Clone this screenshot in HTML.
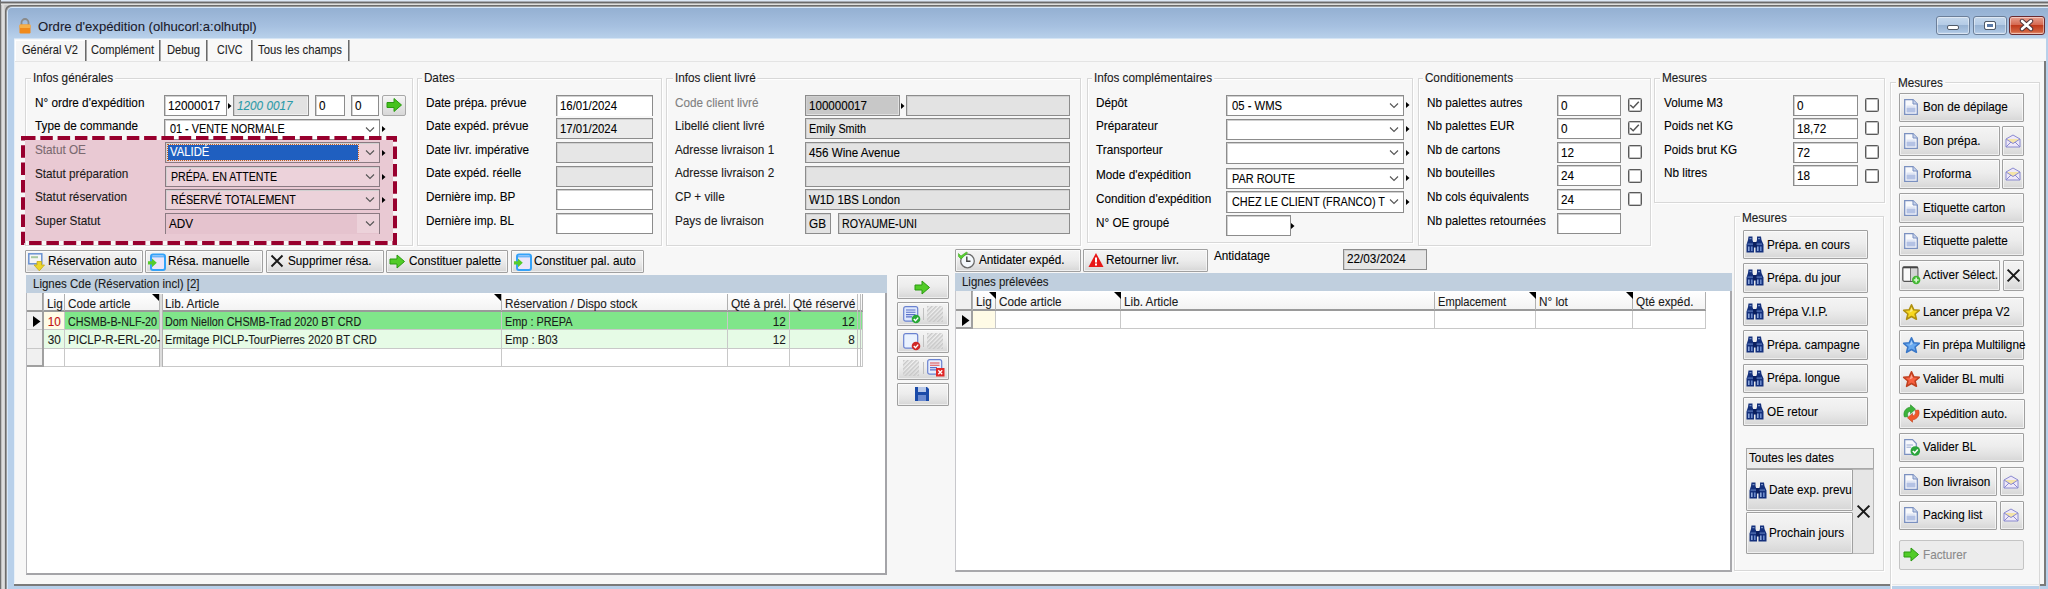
<!DOCTYPE html>
<html><head><meta charset="utf-8"><style>
html,body{margin:0;padding:0;width:2048px;height:589px;overflow:hidden;background:#f7f7f7}
body>div{position:absolute}
.t{position:absolute;white-space:nowrap;font-family:"Liberation Sans",sans-serif;-webkit-text-stroke:0.1px currentColor}
body{font-family:"Liberation Sans",sans-serif;font-size:12.4px}
</style></head><body>
<div style="left:0px;top:0px;width:2048px;height:589px;background:linear-gradient(90deg,#a8a8a8 1px,#d4d4d4 2px,#e4e4e4 3px,#c8c8c8 5px)"></div>
<div style="left:0px;top:0px;width:2048px;height:1px;background:#dce8f6"></div>
<div style="left:0px;top:1px;width:2048px;height:1px;background:#a8acb4"></div>
<div style="left:0px;top:2px;width:2048px;height:1px;background:#6a6a6a"></div>
<div style="left:0px;top:3px;width:2048px;height:1px;background:#b0b0b0"></div>
<div style="left:0px;top:4px;width:2048px;height:1px;background:#e0e0de"></div>
<div style="left:0px;top:0px;width:1px;height:589px;background:#707070"></div>
<div style="left:5px;top:5px;width:2043px;height:584px;background:#6c6c6c;border-top-left-radius:6px"></div>
<div style="left:6px;top:6px;width:2042px;height:583px;background:#9a9a9a;border-top-left-radius:6px"></div>
<div style="left:7px;top:7px;width:2041px;height:582px;background:#d6e8fb;border-top-left-radius:5px"></div>
<div style="left:8px;top:8px;width:2040px;height:581px;background:#b8d0ea;border-top-left-radius:4px"></div>
<div style="left:8px;top:8px;width:2040px;height:30px;background:linear-gradient(#94b0d2,#a6c0e0 60%,#b8d0ea);border-top-left-radius:4px"></div>
<svg style="position:absolute;left:18px;top:17px" width="14" height="17" viewBox="0 0 14 17"><path d="M3.5 8 V5.5 A3.5 3.5 0 0 1 10.5 5.5 V8" fill="none" stroke="#8a8a8a" stroke-width="1.8"/><rect x="1.5" y="7.5" width="11" height="9" rx="1.2" fill="#f08a1c"/><rect x="1.5" y="7.5" width="11" height="3.5" rx="1" fill="#f6b04a"/></svg>
<div class="t" style="left:38px;top:20.23px;font-size:13.2px;line-height:13.2px;color:#1a1a2a;transform:scaleX(0.9965);transform-origin:0 0;">Ordre d&#x27;expédition (olhucorl:a:olhutpl)</div>
<div style="left:1936px;top:16px;width:34px;height:19px;background:linear-gradient(#c6d8ec,#b4cbe6 45%,#98b3d3 50%,#a8c2e0 85%,#c3d6ee);border:1px solid #6c7f99;border-radius:3px;box-sizing:border-box;box-shadow:inset 0 0 0 1px rgba(255,255,255,.45)"></div>
<div style="left:1973px;top:16px;width:34px;height:19px;background:linear-gradient(#c6d8ec,#b4cbe6 45%,#98b3d3 50%,#a8c2e0 85%,#c3d6ee);border:1px solid #6c7f99;border-radius:3px;box-sizing:border-box;box-shadow:inset 0 0 0 1px rgba(255,255,255,.45)"></div>
<div style="left:2009px;top:16px;width:36px;height:19px;background:linear-gradient(#e8a090,#d56a52 45%,#c03a1c 50%,#d0603e 85%,#e89a80);border:1px solid #6a2a30;border-radius:3px;box-sizing:border-box;box-shadow:inset 0 0 0 1px rgba(255,255,255,.45)"></div>
<div style="left:1947px;top:25px;width:12px;height:5px;background:#fff;border:1px solid #505a68;border-radius:2px;box-sizing:border-box"></div>
<div style="left:1983.5px;top:20.5px;width:12px;height:9.5px;background:#5a7aa8;border:1px solid #505a68;box-shadow:inset 0 0 0 2px #fff;border-radius:2px;box-sizing:border-box"></div>
<svg style="position:absolute;left:2018px;top:18px" width="17" height="14" viewBox="0 0 17 14"><path d="M4 3 L13 11 M13 3 L4 11" stroke="#4a3038" stroke-width="4.4" stroke-linecap="round"/><path d="M4 3 L13 11 M13 3 L4 11" stroke="#fff" stroke-width="2.6" stroke-linecap="round"/></svg>
<div style="left:14px;top:38px;width:2032px;height:1px;background:#d4e4f4"></div>
<div style="left:14px;top:39px;width:2032px;height:547px;background:#f7f7f7"></div>
<div style="left:2044px;top:61px;width:2px;height:525px;background:#7a7a7a"></div>
<div style="left:14px;top:584px;width:1876px;height:2px;background:#7a7a7a"></div>
<div style="left:1890px;top:584px;width:150px;height:1px;background:#e8e8e8"></div>
<div style="left:2040px;top:584px;width:6px;height:2px;background:#7a7a7a"></div>
<div style="left:15px;top:61px;width:2029px;height:1px;background:#e4e4e4"></div>
<div style="left:14px;top:39px;width:1px;height:544px;background:#e8f0f8"></div>
<div style="left:15px;top:40px;width:335px;height:21px;background:#f8f8f8"></div>
<div style="left:15px;top:40px;width:71px;height:21px;background:#f6f6f6;border-top:1px solid #fff;border-left:1px solid #fff;box-sizing:border-box"></div>
<div style="left:85px;top:40px;width:1px;height:21px;background:#6a6a6a"></div>
<div style="left:86px;top:40px;width:1px;height:21px;background:#a8a8a8"></div>
<div style="left:159px;top:40px;width:1px;height:21px;background:#6a6a6a"></div>
<div style="left:160px;top:40px;width:1px;height:21px;background:#a8a8a8"></div>
<div style="left:206px;top:40px;width:1px;height:21px;background:#6a6a6a"></div>
<div style="left:207px;top:40px;width:1px;height:21px;background:#a8a8a8"></div>
<div style="left:251px;top:40px;width:1px;height:21px;background:#6a6a6a"></div>
<div style="left:252px;top:40px;width:1px;height:21px;background:#a8a8a8"></div>
<div style="left:348px;top:40px;width:1px;height:21px;background:#6a6a6a"></div>
<div style="left:349px;top:40px;width:1px;height:21px;background:#a8a8a8"></div>
<div class="t" style="left:22px;top:44.07px;font-size:12.2px;line-height:12.2px;color:#1e1e1e;transform:scaleX(0.9080);transform-origin:0 0;">Général V2</div>
<div class="t" style="left:91px;top:44.07px;font-size:12.2px;line-height:12.2px;color:#1e1e1e;transform:scaleX(0.9116);transform-origin:0 0;">Complément</div>
<div class="t" style="left:167px;top:44.07px;font-size:12.2px;line-height:12.2px;color:#1e1e1e;transform:scaleX(0.9187);transform-origin:0 0;">Debug</div>
<div class="t" style="left:216.5px;top:44.07px;font-size:12.2px;line-height:12.2px;color:#1e1e1e;transform:scaleX(0.8760);transform-origin:0 0;">CIVC</div>
<div class="t" style="left:258px;top:44.07px;font-size:12.2px;line-height:12.2px;color:#1e1e1e;transform:scaleX(0.9251);transform-origin:0 0;">Tous les champs</div>
<div style="left:25px;top:78px;width:388px;height:168px;border:1px solid #d8d8d8;box-shadow:inset 1px 1px 0 #fff, 1px 1px 0 #fff;box-sizing:border-box"></div>
<div class="t" style="left:31px;top:72.30px;font-size:12.4px;line-height:12.4px;color:#1a1a1a;transform:scaleX(0.9476);transform-origin:0 0;background:#f7f7f7;padding:0 2px">Infos générales</div>
<div style="left:417px;top:78px;width:245px;height:168px;border:1px solid #d8d8d8;box-shadow:inset 1px 1px 0 #fff, 1px 1px 0 #fff;box-sizing:border-box"></div>
<div class="t" style="left:422px;top:72.30px;font-size:12.4px;line-height:12.4px;color:#1a1a1a;transform:scaleX(0.9476);transform-origin:0 0;background:#f7f7f7;padding:0 2px">Dates</div>
<div style="left:666px;top:78px;width:415px;height:168px;border:1px solid #d8d8d8;box-shadow:inset 1px 1px 0 #fff, 1px 1px 0 #fff;box-sizing:border-box"></div>
<div class="t" style="left:673px;top:72.30px;font-size:12.4px;line-height:12.4px;color:#1a1a1a;transform:scaleX(0.9476);transform-origin:0 0;background:#f7f7f7;padding:0 2px">Infos client livré</div>
<div style="left:1087px;top:78px;width:326px;height:165px;border:1px solid #d8d8d8;box-shadow:inset 1px 1px 0 #fff, 1px 1px 0 #fff;box-sizing:border-box"></div>
<div class="t" style="left:1092px;top:72.30px;font-size:12.4px;line-height:12.4px;color:#1a1a1a;transform:scaleX(0.9476);transform-origin:0 0;background:#f7f7f7;padding:0 2px">Infos complémentaires</div>
<div style="left:1418px;top:78px;width:233px;height:168px;border:1px solid #d8d8d8;box-shadow:inset 1px 1px 0 #fff, 1px 1px 0 #fff;box-sizing:border-box"></div>
<div class="t" style="left:1423px;top:72.30px;font-size:12.4px;line-height:12.4px;color:#1a1a1a;transform:scaleX(0.9476);transform-origin:0 0;background:#f7f7f7;padding:0 2px">Conditionements</div>
<div style="left:1654px;top:78px;width:231px;height:125px;border:1px solid #d8d8d8;box-shadow:inset 1px 1px 0 #fff, 1px 1px 0 #fff;box-sizing:border-box"></div>
<div class="t" style="left:1660px;top:72.30px;font-size:12.4px;line-height:12.4px;color:#1a1a1a;transform:scaleX(0.9476);transform-origin:0 0;background:#f7f7f7;padding:0 2px">Mesures</div>
<div style="left:1734px;top:216px;width:150px;height:355px;border:1px solid #d8d8d8;box-shadow:inset 1px 1px 0 #fff, 1px 1px 0 #fff;box-sizing:border-box"></div>
<div class="t" style="left:1740px;top:211.90px;font-size:12.4px;line-height:12.4px;color:#1a1a1a;transform:scaleX(0.9476);transform-origin:0 0;background:#f7f7f7;padding:0 2px">Mesures</div>
<div style="left:1890px;top:82px;width:150px;height:510px;border-left:1px solid #d8d8d8;border-top:1px solid #d8d8d8;border-right:1px solid #d8d8d8;box-shadow:inset 1px 1px 0 #fff;box-sizing:border-box"></div>
<div class="t" style="left:1896px;top:76.50px;font-size:12.4px;line-height:12.4px;color:#1a1a1a;transform:scaleX(0.9476);transform-origin:0 0;background:#f7f7f7;padding:0 2px">Mesures</div>
<div class="t" style="left:35px;top:96.70px;font-size:12.4px;line-height:12.4px;color:#000;transform:scaleX(0.9476);transform-origin:0 0;">N° ordre d&#x27;expédition</div>
<div class="t" style="left:35px;top:120.20px;font-size:12.4px;line-height:12.4px;color:#000;transform:scaleX(0.9476);transform-origin:0 0;">Type de commande</div>
<div style="left:164px;top:95px;width:63px;height:21px;background:#fff;border:1px solid #8c8c8c;box-shadow:inset 1px 1px 0 #d0d0d0;box-sizing:border-box;"></div>
<div class="t" style="left:168px;top:99.90px;font-size:12.4px;line-height:12.4px;color:#000;transform:scaleX(0.9476);transform-origin:0 0;">12000017</div>
<svg style="position:absolute;left:228px;top:102.5px" width="4" height="6" viewBox="0 0 4 6"><path d="M0 0 L3.5 3 L0 6Z" fill="#000"/></svg>
<div style="left:233px;top:95px;width:76px;height:21px;background:#f0f0f0;border:1px solid #8c8c8c;box-shadow:inset 1px 1px 0 #d0d0d0;box-sizing:border-box;"></div>
<div style="left:235px;top:97px;width:72px;height:17px;background:#e2e2e2"></div>
<div class="t" style="left:237px;top:99.90px;font-size:12.4px;line-height:12.4px;color:#2a9aa8;transform:scaleX(0.9476);transform-origin:0 0;font-style:italic">1200 0017</div>
<div style="left:315px;top:95px;width:30px;height:21px;background:#fff;border:1px solid #8c8c8c;box-shadow:inset 1px 1px 0 #d0d0d0;box-sizing:border-box;"></div>
<div class="t" style="left:319px;top:99.90px;font-size:12.4px;line-height:12.4px;color:#000;transform:scaleX(0.9476);transform-origin:0 0;">0</div>
<div style="left:351px;top:95px;width:28px;height:21px;background:#fff;border:1px solid #8c8c8c;box-shadow:inset 1px 1px 0 #d0d0d0;box-sizing:border-box;"></div>
<div class="t" style="left:355px;top:99.90px;font-size:12.4px;line-height:12.4px;color:#000;transform:scaleX(0.9476);transform-origin:0 0;">0</div>
<div style="left:382px;top:95px;width:24px;height:21px;background:linear-gradient(#f6f6f6,#e6e6e6 50%,#d8d8d8);border:1px solid #a8a8a8;border-radius:2px;box-sizing:border-box"></div>
<svg style="position:absolute;left:386px;top:97px" width="17" height="16" viewBox="0 0 17 16"><path d="M1 5.5 H8 V1.5 L15.5 8 L8 14.5 V10.5 H1 Z" fill="#46c21e" stroke="#2a9a10" stroke-width="1"/></svg>
<div style="left:164px;top:118.5px;width:216px;height:21px;background:#fff;border:1px solid #8c8c8c;box-shadow:inset 1px 1px 0 #d0d0d0;box-sizing:border-box"></div>
<div class="t" style="left:170px;top:123.40px;font-size:12.4px;line-height:12.4px;color:#000;transform:scaleX(0.8767);transform-origin:0 0;">01 - VENTE NORMALE</div>
<svg style="position:absolute;left:365px;top:126.5px" width="10" height="6" viewBox="0 0 10 6"><path d="M1 0.5 L5 4.5 L9 0.5" fill="none" stroke="#555" stroke-width="1.1"/></svg>
<svg style="position:absolute;left:382px;top:126.0px" width="4" height="6" viewBox="0 0 4 6"><path d="M0 0 L3.5 3 L0 6Z" fill="#000"/></svg>
<div style="left:25px;top:140px;width:368px;height:101px;background:#e9c9d3"></div>
<svg style="position:absolute;left:21px;top:136px" width="376" height="109"><rect x="2" y="2" width="372" height="105" fill="none" stroke="#98002e" stroke-width="4" stroke-dasharray="12.5 4.8"/></svg>
<div class="t" style="left:35px;top:143.90px;font-size:12.4px;line-height:12.4px;color:#7a6a70;transform:scaleX(0.9476);transform-origin:0 0;">Statut OE</div>
<div class="t" style="left:35px;top:167.80px;font-size:12.4px;line-height:12.4px;color:#1a1a1a;transform:scaleX(0.9476);transform-origin:0 0;">Statut préparation</div>
<div class="t" style="left:35px;top:191.20px;font-size:12.4px;line-height:12.4px;color:#1a1a1a;transform:scaleX(0.9476);transform-origin:0 0;">Statut réservation</div>
<div class="t" style="left:35px;top:214.60px;font-size:12.4px;line-height:12.4px;color:#1a1a1a;transform:scaleX(0.9476);transform-origin:0 0;">Super Statut</div>
<div style="left:165px;top:142.2px;width:215px;height:20.5px;background:#ecd2da;border:1px solid #8a7a82;box-shadow:inset 1px 1px 0 #d0d0d0;box-sizing:border-box"></div>
<svg style="position:absolute;left:365px;top:150.2px" width="10" height="6" viewBox="0 0 10 6"><path d="M1 0.5 L5 4.5 L9 0.5" fill="none" stroke="#555" stroke-width="1.1"/></svg>
<svg style="position:absolute;left:382px;top:149.7px" width="4" height="6" viewBox="0 0 4 6"><path d="M0 0 L3.5 3 L0 6Z" fill="#000"/></svg>
<div style="left:165px;top:166px;width:215px;height:20.5px;background:#ecd2da;border:1px solid #8a7a82;box-shadow:inset 1px 1px 0 #d0d0d0;box-sizing:border-box"></div>
<div class="t" style="left:171px;top:170.90px;font-size:12.4px;line-height:12.4px;color:#000;transform:scaleX(0.8586);transform-origin:0 0;">PRÉPA. EN ATTENTE</div>
<svg style="position:absolute;left:365px;top:174px" width="10" height="6" viewBox="0 0 10 6"><path d="M1 0.5 L5 4.5 L9 0.5" fill="none" stroke="#555" stroke-width="1.1"/></svg>
<svg style="position:absolute;left:382px;top:173.5px" width="4" height="6" viewBox="0 0 4 6"><path d="M0 0 L3.5 3 L0 6Z" fill="#000"/></svg>
<div style="left:165px;top:189.4px;width:215px;height:20.5px;background:#ecd2da;border:1px solid #8a7a82;box-shadow:inset 1px 1px 0 #d0d0d0;box-sizing:border-box"></div>
<div class="t" style="left:171px;top:194.30px;font-size:12.4px;line-height:12.4px;color:#000;transform:scaleX(0.8643);transform-origin:0 0;">RÉSERVÉ TOTALEMENT</div>
<svg style="position:absolute;left:365px;top:197.4px" width="10" height="6" viewBox="0 0 10 6"><path d="M1 0.5 L5 4.5 L9 0.5" fill="none" stroke="#555" stroke-width="1.1"/></svg>
<svg style="position:absolute;left:382px;top:196.9px" width="4" height="6" viewBox="0 0 4 6"><path d="M0 0 L3.5 3 L0 6Z" fill="#000"/></svg>
<div style="left:168px;top:145px;width:190px;height:15px;background:#1f5fc0;outline:1px dotted #c06020"></div>
<div class="t" style="left:170px;top:146.20px;font-size:12.4px;line-height:12.4px;color:#fff;transform:scaleX(0.9130);transform-origin:0 0;">VALIDÉ</div>
<div style="left:165px;top:213px;width:215px;height:21px;background:#e5c3ce;border-left:1px solid #8a7a82;border-top:1px solid #8a7a82;border-right:1px solid #8a7a82;box-sizing:border-box"></div>
<div style="left:357px;top:214px;width:22px;height:19px;background:#ecd2da"></div>
<div class="t" style="left:169px;top:217.90px;font-size:12.4px;line-height:12.4px;color:#000;transform:scaleX(0.9476);transform-origin:0 0;">ADV</div>
<svg style="position:absolute;left:365px;top:221px" width="10" height="6" viewBox="0 0 10 6"><path d="M1 0.5 L5 4.5 L9 0.5" fill="none" stroke="#555" stroke-width="1.1"/></svg>
<div class="t" style="left:426px;top:96.70px;font-size:12.4px;line-height:12.4px;color:#000;transform:scaleX(0.9476);transform-origin:0 0;">Date prépa. prévue</div>
<div class="t" style="left:426px;top:120.20px;font-size:12.4px;line-height:12.4px;color:#000;transform:scaleX(0.9476);transform-origin:0 0;">Date expéd. prévue</div>
<div class="t" style="left:426px;top:143.70px;font-size:12.4px;line-height:12.4px;color:#000;transform:scaleX(0.9476);transform-origin:0 0;">Date livr. impérative</div>
<div class="t" style="left:426px;top:167.40px;font-size:12.4px;line-height:12.4px;color:#000;transform:scaleX(0.9476);transform-origin:0 0;">Date expéd. réelle</div>
<div class="t" style="left:426px;top:191.10px;font-size:12.4px;line-height:12.4px;color:#000;transform:scaleX(0.9476);transform-origin:0 0;">Dernière imp. BP</div>
<div class="t" style="left:426px;top:214.60px;font-size:12.4px;line-height:12.4px;color:#000;transform:scaleX(0.9476);transform-origin:0 0;">Dernière imp. BL</div>
<div style="left:556px;top:94.6px;width:97px;height:21px;background:#fff;border:1px solid #8c8c8c;box-shadow:inset 1px 1px 0 #d0d0d0;box-sizing:border-box;border-bottom:none"></div>
<div class="t" style="left:560px;top:99.50px;font-size:12.4px;line-height:12.4px;color:#000;transform:scaleX(0.9194);transform-origin:0 0;">16/01/2024</div>
<div style="left:556px;top:118.3px;width:97px;height:21px;background:#ebebeb;border:1px solid #8c8c8c;box-shadow:inset 1px 1px 0 #d0d0d0;box-sizing:border-box;"></div>
<div class="t" style="left:560px;top:123.20px;font-size:12.4px;line-height:12.4px;color:#000;transform:scaleX(0.9194);transform-origin:0 0;">17/01/2024</div>
<div style="left:556px;top:142px;width:97px;height:21px;background:#e6e6e6;border:1px solid #8c8c8c;box-shadow:inset 1px 1px 0 #d0d0d0;box-sizing:border-box;"></div>
<div style="left:556px;top:165.7px;width:97px;height:21px;background:#e6e6e6;border:1px solid #8c8c8c;box-shadow:inset 1px 1px 0 #d0d0d0;box-sizing:border-box;"></div>
<div style="left:556px;top:189.4px;width:97px;height:21px;background:#fff;border:1px solid #8c8c8c;box-shadow:inset 1px 1px 0 #d0d0d0;box-sizing:border-box;"></div>
<div style="left:556px;top:213px;width:97px;height:21px;background:#fff;border:1px solid #8c8c8c;box-shadow:inset 1px 1px 0 #d0d0d0;box-sizing:border-box;"></div>
<div class="t" style="left:675px;top:96.70px;font-size:12.4px;line-height:12.4px;color:#808080;transform:scaleX(0.9476);transform-origin:0 0;">Code client livré</div>
<div class="t" style="left:675px;top:120.20px;font-size:12.4px;line-height:12.4px;color:#1a1a1a;transform:scaleX(0.9476);transform-origin:0 0;">Libellé client livré</div>
<div class="t" style="left:675px;top:143.70px;font-size:12.4px;line-height:12.4px;color:#1a1a1a;transform:scaleX(0.9476);transform-origin:0 0;">Adresse livraison 1</div>
<div class="t" style="left:675px;top:167.40px;font-size:12.4px;line-height:12.4px;color:#1a1a1a;transform:scaleX(0.9476);transform-origin:0 0;">Adresse livraison 2</div>
<div class="t" style="left:675px;top:191.10px;font-size:12.4px;line-height:12.4px;color:#1a1a1a;transform:scaleX(0.9476);transform-origin:0 0;">CP + ville</div>
<div class="t" style="left:675px;top:214.60px;font-size:12.4px;line-height:12.4px;color:#1a1a1a;transform:scaleX(0.9476);transform-origin:0 0;">Pays de livraison</div>
<div style="left:805px;top:94.6px;width:95px;height:21px;background:#e0e0e0;border:1px solid #8c8c8c;box-shadow:inset 1px 1px 0 #d0d0d0;box-sizing:border-box;"></div>
<div style="left:807px;top:96.6px;width:91px;height:17px;background:#c8c8c8"></div>
<div class="t" style="left:809px;top:99.50px;font-size:12.4px;line-height:12.4px;color:#000;transform:scaleX(0.9352);transform-origin:0 0;">100000017</div>
<svg style="position:absolute;left:901px;top:102.5px" width="4" height="6" viewBox="0 0 4 6"><path d="M0 0 L3.5 3 L0 6Z" fill="#000"/></svg>
<div style="left:906px;top:94.6px;width:164px;height:21px;background:#e3e3e3;border:1px solid #8c8c8c;box-shadow:inset 1px 1px 0 #d0d0d0;box-sizing:border-box;"></div>
<div style="left:805px;top:118.3px;width:265px;height:21px;background:#e3e3e3;border:1px solid #8c8c8c;box-shadow:inset 1px 1px 0 #d0d0d0;box-sizing:border-box;"></div>
<div class="t" style="left:809px;top:123.20px;font-size:12.4px;line-height:12.4px;color:#000;transform:scaleX(0.8715);transform-origin:0 0;">Emily Smith</div>
<div style="left:805px;top:142px;width:265px;height:21px;background:#e3e3e3;border:1px solid #8c8c8c;box-shadow:inset 1px 1px 0 #d0d0d0;box-sizing:border-box;"></div>
<div class="t" style="left:809px;top:146.90px;font-size:12.4px;line-height:12.4px;color:#000;transform:scaleX(0.9392);transform-origin:0 0;">456 Wine Avenue</div>
<div style="left:805px;top:165.7px;width:265px;height:21px;background:#e3e3e3;border:1px solid #8c8c8c;box-shadow:inset 1px 1px 0 #d0d0d0;box-sizing:border-box;"></div>
<div style="left:805px;top:189.4px;width:265px;height:21px;background:#e3e3e3;border:1px solid #8c8c8c;box-shadow:inset 1px 1px 0 #d0d0d0;box-sizing:border-box;"></div>
<div class="t" style="left:809px;top:194.30px;font-size:12.4px;line-height:12.4px;color:#000;transform:scaleX(0.9176);transform-origin:0 0;">W1D 1BS London</div>
<div style="left:805px;top:213px;width:26px;height:21px;background:#e3e3e3;border:1px solid #8c8c8c;box-shadow:inset 1px 1px 0 #d0d0d0;box-sizing:border-box;"></div>
<div class="t" style="left:809px;top:217.90px;font-size:12.4px;line-height:12.4px;color:#000;transform:scaleX(0.9476);transform-origin:0 0;">GB</div>
<div style="left:838px;top:213px;width:232px;height:21px;background:#e3e3e3;border:1px solid #8c8c8c;box-shadow:inset 1px 1px 0 #d0d0d0;box-sizing:border-box;"></div>
<div class="t" style="left:842px;top:217.90px;font-size:12.4px;line-height:12.4px;color:#000;transform:scaleX(0.8599);transform-origin:0 0;">ROYAUME-UNI</div>
<div class="t" style="left:1096px;top:96.70px;font-size:12.4px;line-height:12.4px;color:#000;transform:scaleX(0.9476);transform-origin:0 0;">Dépôt</div>
<div class="t" style="left:1096px;top:120.20px;font-size:12.4px;line-height:12.4px;color:#000;transform:scaleX(0.9476);transform-origin:0 0;">Préparateur</div>
<div class="t" style="left:1096px;top:143.90px;font-size:12.4px;line-height:12.4px;color:#000;transform:scaleX(0.9476);transform-origin:0 0;">Transporteur</div>
<div class="t" style="left:1096px;top:169.40px;font-size:12.4px;line-height:12.4px;color:#000;transform:scaleX(0.9476);transform-origin:0 0;">Mode d&#x27;expédition</div>
<div class="t" style="left:1096px;top:192.80px;font-size:12.4px;line-height:12.4px;color:#000;transform:scaleX(0.9476);transform-origin:0 0;">Condition d&#x27;expédition</div>
<div class="t" style="left:1096px;top:216.60px;font-size:12.4px;line-height:12.4px;color:#000;transform:scaleX(0.9476);transform-origin:0 0;">N° OE groupé</div>
<div style="left:1226px;top:94.8px;width:178px;height:21px;background:#fff;border:1px solid #8c8c8c;box-shadow:inset 1px 1px 0 #d0d0d0;box-sizing:border-box"></div>
<div class="t" style="left:1232px;top:99.70px;font-size:12.4px;line-height:12.4px;color:#000;transform:scaleX(0.9081);transform-origin:0 0;">05 - WMS</div>
<svg style="position:absolute;left:1389px;top:102.8px" width="10" height="6" viewBox="0 0 10 6"><path d="M1 0.5 L5 4.5 L9 0.5" fill="none" stroke="#555" stroke-width="1.1"/></svg>
<svg style="position:absolute;left:1406px;top:102.3px" width="4" height="6" viewBox="0 0 4 6"><path d="M0 0 L3.5 3 L0 6Z" fill="#000"/></svg>
<div style="left:1226px;top:118.6px;width:178px;height:21px;background:#fff;border:1px solid #8c8c8c;box-shadow:inset 1px 1px 0 #d0d0d0;box-sizing:border-box"></div>
<svg style="position:absolute;left:1389px;top:126.6px" width="10" height="6" viewBox="0 0 10 6"><path d="M1 0.5 L5 4.5 L9 0.5" fill="none" stroke="#555" stroke-width="1.1"/></svg>
<svg style="position:absolute;left:1406px;top:126.1px" width="4" height="6" viewBox="0 0 4 6"><path d="M0 0 L3.5 3 L0 6Z" fill="#000"/></svg>
<div style="left:1226px;top:142.4px;width:178px;height:22px;background:#fff;border:1px solid #8c8c8c;box-shadow:inset 1px 1px 0 #d0d0d0;box-sizing:border-box"></div>
<svg style="position:absolute;left:1389px;top:150.4px" width="10" height="6" viewBox="0 0 10 6"><path d="M1 0.5 L5 4.5 L9 0.5" fill="none" stroke="#555" stroke-width="1.1"/></svg>
<svg style="position:absolute;left:1406px;top:149.9px" width="4" height="6" viewBox="0 0 4 6"><path d="M0 0 L3.5 3 L0 6Z" fill="#000"/></svg>
<div style="left:1226px;top:167.7px;width:178px;height:21.5px;background:#fff;border:1px solid #8c8c8c;box-shadow:inset 1px 1px 0 #d0d0d0;box-sizing:border-box"></div>
<div class="t" style="left:1232px;top:172.60px;font-size:12.4px;line-height:12.4px;color:#000;transform:scaleX(0.8827);transform-origin:0 0;">PAR ROUTE</div>
<svg style="position:absolute;left:1389px;top:175.7px" width="10" height="6" viewBox="0 0 10 6"><path d="M1 0.5 L5 4.5 L9 0.5" fill="none" stroke="#555" stroke-width="1.1"/></svg>
<svg style="position:absolute;left:1406px;top:175.2px" width="4" height="6" viewBox="0 0 4 6"><path d="M0 0 L3.5 3 L0 6Z" fill="#000"/></svg>
<div style="left:1226px;top:191px;width:178px;height:21.5px;background:#fff;border:1px solid #8c8c8c;box-shadow:inset 1px 1px 0 #d0d0d0;box-sizing:border-box"></div>
<div class="t" style="left:1232px;top:195.90px;font-size:12.4px;line-height:12.4px;color:#000;transform:scaleX(0.8773);transform-origin:0 0;">CHEZ LE CLIENT (FRANCO) T</div>
<svg style="position:absolute;left:1389px;top:199px" width="10" height="6" viewBox="0 0 10 6"><path d="M1 0.5 L5 4.5 L9 0.5" fill="none" stroke="#555" stroke-width="1.1"/></svg>
<svg style="position:absolute;left:1406px;top:198.5px" width="4" height="6" viewBox="0 0 4 6"><path d="M0 0 L3.5 3 L0 6Z" fill="#000"/></svg>
<div style="left:1226px;top:215px;width:65px;height:21px;background:#fff;border:1px solid #8c8c8c;box-shadow:inset 1px 1px 0 #d0d0d0;box-sizing:border-box;"></div>
<svg style="position:absolute;left:1291px;top:222.5px" width="4" height="6" viewBox="0 0 4 6"><path d="M0 0 L3.5 3 L0 6Z" fill="#000"/></svg>
<div class="t" style="left:1427px;top:96.70px;font-size:12.4px;line-height:12.4px;color:#000;transform:scaleX(0.9476);transform-origin:0 0;">Nb palettes autres</div>
<div style="left:1557px;top:94.6px;width:64px;height:21px;background:#fff;border:1px solid #8c8c8c;box-shadow:inset 1px 1px 0 #d0d0d0;box-sizing:border-box;"></div>
<div class="t" style="left:1561px;top:99.50px;font-size:12.4px;line-height:12.4px;color:#000;transform:scaleX(0.9476);transform-origin:0 0;">0</div>
<div class="t" style="left:1427px;top:120.20px;font-size:12.4px;line-height:12.4px;color:#000;transform:scaleX(0.9476);transform-origin:0 0;">Nb palettes EUR</div>
<div style="left:1557px;top:118.19999999999999px;width:64px;height:21px;background:#fff;border:1px solid #8c8c8c;box-shadow:inset 1px 1px 0 #d0d0d0;box-sizing:border-box;"></div>
<div class="t" style="left:1561px;top:123.10px;font-size:12.4px;line-height:12.4px;color:#000;transform:scaleX(0.9476);transform-origin:0 0;">0</div>
<div class="t" style="left:1427px;top:143.70px;font-size:12.4px;line-height:12.4px;color:#000;transform:scaleX(0.9476);transform-origin:0 0;">Nb de cartons</div>
<div style="left:1557px;top:141.8px;width:64px;height:21px;background:#fff;border:1px solid #8c8c8c;box-shadow:inset 1px 1px 0 #d0d0d0;box-sizing:border-box;"></div>
<div class="t" style="left:1561px;top:146.70px;font-size:12.4px;line-height:12.4px;color:#000;transform:scaleX(0.9476);transform-origin:0 0;">12</div>
<div class="t" style="left:1427px;top:167.40px;font-size:12.4px;line-height:12.4px;color:#000;transform:scaleX(0.9476);transform-origin:0 0;">Nb bouteilles</div>
<div style="left:1557px;top:165.4px;width:64px;height:21px;background:#fff;border:1px solid #8c8c8c;box-shadow:inset 1px 1px 0 #d0d0d0;box-sizing:border-box;"></div>
<div class="t" style="left:1561px;top:170.30px;font-size:12.4px;line-height:12.4px;color:#000;transform:scaleX(0.9476);transform-origin:0 0;">24</div>
<div class="t" style="left:1427px;top:191.10px;font-size:12.4px;line-height:12.4px;color:#000;transform:scaleX(0.9476);transform-origin:0 0;">Nb cols équivalents</div>
<div style="left:1557px;top:189.0px;width:64px;height:21px;background:#fff;border:1px solid #8c8c8c;box-shadow:inset 1px 1px 0 #d0d0d0;box-sizing:border-box;"></div>
<div class="t" style="left:1561px;top:193.90px;font-size:12.4px;line-height:12.4px;color:#000;transform:scaleX(0.9476);transform-origin:0 0;">24</div>
<div class="t" style="left:1427px;top:214.60px;font-size:12.4px;line-height:12.4px;color:#000;transform:scaleX(0.9476);transform-origin:0 0;">Nb palettes retournées</div>
<div style="left:1557px;top:212.6px;width:64px;height:21px;background:#fff;border:1px solid #8c8c8c;box-shadow:inset 1px 1px 0 #d0d0d0;box-sizing:border-box;"></div>
<div style="left:1627.5px;top:97.7px;width:14px;height:14px;background:#fff;border:1px solid #5a5a5a;border-radius:1.5px;box-shadow:inset 0 0 0 0.6px #8a8a8a;box-sizing:border-box"></div>
<svg style="position:absolute;left:1627px;top:97.7px" width="14" height="14" viewBox="0 0 14 14"><path d="M3.2 7 L6.2 9.8 L11.8 3.8" fill="none" stroke="#555" stroke-width="1.5"/></svg>
<div style="left:1627.5px;top:121.30000000000001px;width:14px;height:14px;background:#fff;border:1px solid #5a5a5a;border-radius:1.5px;box-shadow:inset 0 0 0 0.6px #8a8a8a;box-sizing:border-box"></div>
<svg style="position:absolute;left:1627px;top:121.30000000000001px" width="14" height="14" viewBox="0 0 14 14"><path d="M3.2 7 L6.2 9.8 L11.8 3.8" fill="none" stroke="#555" stroke-width="1.5"/></svg>
<div style="left:1627.5px;top:144.9px;width:14px;height:14px;background:#fff;border:1px solid #5a5a5a;border-radius:1.5px;box-shadow:inset 0 0 0 0.6px #8a8a8a;box-sizing:border-box"></div>
<div style="left:1627.5px;top:168.5px;width:14px;height:14px;background:#fff;border:1px solid #5a5a5a;border-radius:1.5px;box-shadow:inset 0 0 0 0.6px #8a8a8a;box-sizing:border-box"></div>
<div style="left:1627.5px;top:192.10000000000002px;width:14px;height:14px;background:#fff;border:1px solid #5a5a5a;border-radius:1.5px;box-shadow:inset 0 0 0 0.6px #8a8a8a;box-sizing:border-box"></div>
<div class="t" style="left:1664px;top:96.70px;font-size:12.4px;line-height:12.4px;color:#000;transform:scaleX(0.9476);transform-origin:0 0;">Volume M3</div>
<div style="left:1793px;top:94.6px;width:65px;height:21px;background:#fff;border:1px solid #8c8c8c;box-shadow:inset 1px 1px 0 #d0d0d0;box-sizing:border-box;"></div>
<div class="t" style="left:1797px;top:99.50px;font-size:12.4px;line-height:12.4px;color:#000;transform:scaleX(0.9476);transform-origin:0 0;">0</div>
<div style="left:1864.5px;top:97.7px;width:14px;height:14px;background:#fff;border:1px solid #5a5a5a;border-radius:1.5px;box-shadow:inset 0 0 0 0.6px #8a8a8a;box-sizing:border-box"></div>
<div class="t" style="left:1664px;top:120.20px;font-size:12.4px;line-height:12.4px;color:#000;transform:scaleX(0.9476);transform-origin:0 0;">Poids net KG</div>
<div style="left:1793px;top:118.19999999999999px;width:65px;height:21px;background:#fff;border:1px solid #8c8c8c;box-shadow:inset 1px 1px 0 #d0d0d0;box-sizing:border-box;"></div>
<div class="t" style="left:1797px;top:123.10px;font-size:12.4px;line-height:12.4px;color:#000;transform:scaleX(0.9476);transform-origin:0 0;">18,72</div>
<div style="left:1864.5px;top:121.30000000000001px;width:14px;height:14px;background:#fff;border:1px solid #5a5a5a;border-radius:1.5px;box-shadow:inset 0 0 0 0.6px #8a8a8a;box-sizing:border-box"></div>
<div class="t" style="left:1664px;top:143.70px;font-size:12.4px;line-height:12.4px;color:#000;transform:scaleX(0.9476);transform-origin:0 0;">Poids brut KG</div>
<div style="left:1793px;top:141.8px;width:65px;height:21px;background:#fff;border:1px solid #8c8c8c;box-shadow:inset 1px 1px 0 #d0d0d0;box-sizing:border-box;"></div>
<div class="t" style="left:1797px;top:146.70px;font-size:12.4px;line-height:12.4px;color:#000;transform:scaleX(0.9476);transform-origin:0 0;">72</div>
<div style="left:1864.5px;top:144.9px;width:14px;height:14px;background:#fff;border:1px solid #5a5a5a;border-radius:1.5px;box-shadow:inset 0 0 0 0.6px #8a8a8a;box-sizing:border-box"></div>
<div class="t" style="left:1664px;top:167.40px;font-size:12.4px;line-height:12.4px;color:#000;transform:scaleX(0.9476);transform-origin:0 0;">Nb litres</div>
<div style="left:1793px;top:165.4px;width:65px;height:21px;background:#fff;border:1px solid #8c8c8c;box-shadow:inset 1px 1px 0 #d0d0d0;box-sizing:border-box;"></div>
<div class="t" style="left:1797px;top:170.30px;font-size:12.4px;line-height:12.4px;color:#000;transform:scaleX(0.9476);transform-origin:0 0;">18</div>
<div style="left:1864.5px;top:168.5px;width:14px;height:14px;background:#fff;border:1px solid #5a5a5a;border-radius:1.5px;box-shadow:inset 0 0 0 0.6px #8a8a8a;box-sizing:border-box"></div>
<div style="left:25px;top:249.5px;width:118px;height:23px;background:linear-gradient(#f4f4f4,#ededed 45%,#e2e2e2 75%,#d6d6d6);border:1px solid #a0a0a0;border-radius:1px;box-sizing:border-box;box-shadow:inset 0 0 0 1px rgba(255,255,255,.6)"></div>
<svg style="position:absolute;left:27px;top:251.5px" width="20" height="20" viewBox="0 0 20 20"><rect x="1.8" y="1.8" width="13" height="10" fill="#f6f6f6" stroke="#6a92d2" stroke-width="1.5"/><rect x="4" y="4.2" width="7" height="2" fill="#a8c8a0"/><path d="M10 9.5 H14.5 V13 H17.5 L12.3 18.8 L7 13 H10Z" fill="#ecd62a" stroke="#c4a818" stroke-width=".8"/></svg>
<div class="t" style="left:48px;top:255.20px;font-size:12.4px;line-height:12.4px;color:#000;transform:scaleX(0.9476);transform-origin:0 0;">Réservation auto</div>
<div style="left:145px;top:249.5px;width:118px;height:23px;background:linear-gradient(#f4f4f4,#ededed 45%,#e2e2e2 75%,#d6d6d6);border:1px solid #a0a0a0;border-radius:1px;box-sizing:border-box;box-shadow:inset 0 0 0 1px rgba(255,255,255,.6)"></div>
<svg style="position:absolute;left:147px;top:252.5px" width="20" height="19" viewBox="0 0 20 19"><rect x="4" y="1.5" width="14" height="15.5" rx="2" fill="#ece6fa" stroke="#34a2f8" stroke-width="2"/><path d="M4.5 3.8 H17.5" stroke="#34a2f8" stroke-width="1"/><path d="M1 8.2 H5 V5.5 L9.8 9.8 L5 14.2 V11.5 H1Z" fill="#56cc2c"/></svg>
<div class="t" style="left:168px;top:255.20px;font-size:12.4px;line-height:12.4px;color:#000;transform:scaleX(0.9476);transform-origin:0 0;">Résa. manuelle</div>
<div style="left:265.5px;top:249.5px;width:118px;height:23px;background:linear-gradient(#f4f4f4,#ededed 45%,#e2e2e2 75%,#d6d6d6);border:1px solid #a0a0a0;border-radius:1px;box-sizing:border-box;box-shadow:inset 0 0 0 1px rgba(255,255,255,.6)"></div>
<svg style="position:absolute;left:269.5px;top:254.0px" width="14" height="14" viewBox="0 0 14 14"><path d="M1.5 1.5 L12.5 12.5 M12.5 1.5 L1.5 12.5" stroke="#1a1a1a" stroke-width="1.9"/></svg>
<div class="t" style="left:288px;top:255.20px;font-size:12.4px;line-height:12.4px;color:#000;transform:scaleX(0.9476);transform-origin:0 0;">Supprimer résa.</div>
<div style="left:386px;top:249.5px;width:122px;height:23px;background:linear-gradient(#f4f4f4,#ededed 45%,#e2e2e2 75%,#d6d6d6);border:1px solid #a0a0a0;border-radius:1px;box-sizing:border-box;box-shadow:inset 0 0 0 1px rgba(255,255,255,.6)"></div>
<svg style="position:absolute;left:389px;top:253.5px" width="17" height="15" viewBox="0 0 17 15"><path d="M1 5 H8 V1 L15.5 7.5 L8 14 V10 H1 Z" fill="#52cc28" stroke="#2a9a10" stroke-width="1"/></svg>
<div class="t" style="left:409px;top:255.20px;font-size:12.4px;line-height:12.4px;color:#000;transform:scaleX(0.9476);transform-origin:0 0;">Constituer palette</div>
<div style="left:510.5px;top:249.5px;width:133px;height:23px;background:linear-gradient(#f4f4f4,#ededed 45%,#e2e2e2 75%,#d6d6d6);border:1px solid #a0a0a0;border-radius:1px;box-sizing:border-box;box-shadow:inset 0 0 0 1px rgba(255,255,255,.6)"></div>
<svg style="position:absolute;left:512.5px;top:252.5px" width="20" height="19" viewBox="0 0 20 19"><rect x="4" y="1.5" width="14" height="15.5" rx="2" fill="#ece6fa" stroke="#34a2f8" stroke-width="2"/><path d="M4.5 3.8 H17.5" stroke="#34a2f8" stroke-width="1"/><path d="M1 8.2 H5 V5.5 L9.8 9.8 L5 14.2 V11.5 H1Z" fill="#56cc2c"/></svg>
<div class="t" style="left:534px;top:255.20px;font-size:12.4px;line-height:12.4px;color:#000;transform:scaleX(0.9476);transform-origin:0 0;">Constituer pal. auto</div>
<div style="left:954.5px;top:248.5px;width:126px;height:23px;background:linear-gradient(#f4f4f4,#ededed 45%,#e2e2e2 75%,#d6d6d6);border:1px solid #a0a0a0;border-radius:1px;box-sizing:border-box;box-shadow:inset 0 0 0 1px rgba(255,255,255,.6)"></div>
<svg style="position:absolute;left:957.5px;top:251.0px" width="18" height="18" viewBox="0 0 18 18"><circle cx="9.5" cy="10" r="6.8" fill="#f4f8fc" stroke="#6a6a6a" stroke-width="1.3"/><path d="M8.8 5.5 V10.2 H12.5" fill="none" stroke="#404040" stroke-width="1.4"/><path d="M0.5 2.5 L3 5 L8.5 1 L9.5 2 L3 8 L0.5 5.5Z" fill="#58d030" stroke="#40a820" stroke-width=".6"/></svg>
<div class="t" style="left:979.4px;top:254.20px;font-size:12.4px;line-height:12.4px;color:#000;transform:scaleX(0.9476);transform-origin:0 0;">Antidater expéd.</div>
<div style="left:1083px;top:248.5px;width:125px;height:23px;background:linear-gradient(#f4f4f4,#ededed 45%,#e2e2e2 75%,#d6d6d6);border:1px solid #a0a0a0;border-radius:1px;box-sizing:border-box;box-shadow:inset 0 0 0 1px rgba(255,255,255,.6)"></div>
<svg style="position:absolute;left:1088px;top:252.0px" width="16" height="16" viewBox="0 0 16 16"><path d="M8 1 L15.5 15 H0.5Z" fill="#e81818"/><rect x="7" y="5.5" width="2" height="5" fill="#fff"/><rect x="7" y="11.5" width="2" height="2" fill="#fff"/></svg>
<div class="t" style="left:1106px;top:254.20px;font-size:12.4px;line-height:12.4px;color:#000;transform:scaleX(0.9476);transform-origin:0 0;">Retourner livr.</div>
<div class="t" style="left:1213.5px;top:249.80px;font-size:12.4px;line-height:12.4px;color:#000;transform:scaleX(0.9476);transform-origin:0 0;">Antidatage</div>
<div style="left:1342.5px;top:248.5px;width:84px;height:21px;background:#e6e6e6;border:1px solid #8c8c8c;box-shadow:inset 1px 1px 0 #d0d0d0;box-sizing:border-box;"></div>
<div class="t" style="left:1346.5px;top:253.40px;font-size:12.4px;line-height:12.4px;color:#000;transform:scaleX(0.9476);transform-origin:0 0;">22/03/2024</div>
<div style="left:1898.5px;top:92.5px;width:125.5px;height:29.5px;background:linear-gradient(#f4f4f4,#ededed 45%,#e2e2e2 75%,#d6d6d6);border:1px solid #a0a0a0;border-radius:1px;box-sizing:border-box;box-shadow:inset 0 0 0 1px rgba(255,255,255,.6)"></div>
<svg style="position:absolute;left:1903.5px;top:99.25px" width="14" height="16" viewBox="0 0 14 16"><path d="M0.7 0.7 H9 L13.3 5 V15.3 H0.7Z" fill="#f8f9fc" stroke="#7a90c0" stroke-width="1.3"/><path d="M9 0.7 V5 H13.3" fill="#c8d4ec" stroke="#7a90c0" stroke-width="1"/><rect x="2.5" y="8.5" width="9" height="5" fill="#b4c2e4"/><rect x="2.5" y="6.5" width="9" height="1.5" fill="#dfe6f4"/></svg>
<div class="t" style="left:1922.5px;top:101.45px;font-size:12.4px;line-height:12.4px;color:#000;transform:scaleX(0.9476);transform-origin:0 0;">Bon de dépilage</div>
<div style="left:1898.5px;top:126px;width:101px;height:29.5px;background:linear-gradient(#f4f4f4,#ededed 45%,#e2e2e2 75%,#d6d6d6);border:1px solid #a0a0a0;border-radius:1px;box-sizing:border-box;box-shadow:inset 0 0 0 1px rgba(255,255,255,.6)"></div>
<svg style="position:absolute;left:1903.5px;top:132.75px" width="14" height="16" viewBox="0 0 14 16"><path d="M0.7 0.7 H9 L13.3 5 V15.3 H0.7Z" fill="#f8f9fc" stroke="#7a90c0" stroke-width="1.3"/><path d="M9 0.7 V5 H13.3" fill="#c8d4ec" stroke="#7a90c0" stroke-width="1"/><rect x="2.5" y="8.5" width="9" height="5" fill="#b4c2e4"/><rect x="2.5" y="6.5" width="9" height="1.5" fill="#dfe6f4"/></svg>
<div class="t" style="left:1922.5px;top:134.95px;font-size:12.4px;line-height:12.4px;color:#000;transform:scaleX(0.9476);transform-origin:0 0;">Bon prépa.</div>
<div style="left:2002px;top:126px;width:22px;height:29.5px;background:linear-gradient(#f4f4f4,#ededed 45%,#e2e2e2 75%,#d6d6d6);border:1px solid #a0a0a0;border-radius:1px;box-sizing:border-box;box-shadow:inset 0 0 0 1px rgba(255,255,255,.6)"></div>
<svg style="position:absolute;left:2005px;top:133.75px" width="16" height="14" viewBox="0 0 16 14"><path d="M1 5 L8 1 L15 5 V13 H1Z" fill="#eee8f8" stroke="#8a8ad0"/><path d="M1 5 L8 9.5 L15 5" fill="#f4e4a8" stroke="#8a8ad0"/><path d="M1 13 L6 8 M15 13 L10 8" stroke="#8a8ad0"/></svg>
<div style="left:1898.5px;top:159px;width:101px;height:29.5px;background:linear-gradient(#f4f4f4,#ededed 45%,#e2e2e2 75%,#d6d6d6);border:1px solid #a0a0a0;border-radius:1px;box-sizing:border-box;box-shadow:inset 0 0 0 1px rgba(255,255,255,.6)"></div>
<svg style="position:absolute;left:1903.5px;top:165.75px" width="14" height="16" viewBox="0 0 14 16"><path d="M0.7 0.7 H9 L13.3 5 V15.3 H0.7Z" fill="#f8f9fc" stroke="#7a90c0" stroke-width="1.3"/><path d="M9 0.7 V5 H13.3" fill="#c8d4ec" stroke="#7a90c0" stroke-width="1"/><rect x="2.5" y="8.5" width="9" height="5" fill="#b4c2e4"/><rect x="2.5" y="6.5" width="9" height="1.5" fill="#dfe6f4"/></svg>
<div class="t" style="left:1922.5px;top:167.95px;font-size:12.4px;line-height:12.4px;color:#000;transform:scaleX(0.9476);transform-origin:0 0;">Proforma</div>
<div style="left:2002px;top:159px;width:22px;height:29.5px;background:linear-gradient(#f4f4f4,#ededed 45%,#e2e2e2 75%,#d6d6d6);border:1px solid #a0a0a0;border-radius:1px;box-sizing:border-box;box-shadow:inset 0 0 0 1px rgba(255,255,255,.6)"></div>
<svg style="position:absolute;left:2005px;top:166.75px" width="16" height="14" viewBox="0 0 16 14"><path d="M1 5 L8 1 L15 5 V13 H1Z" fill="#eee8f8" stroke="#8a8ad0"/><path d="M1 5 L8 9.5 L15 5" fill="#f4e4a8" stroke="#8a8ad0"/><path d="M1 13 L6 8 M15 13 L10 8" stroke="#8a8ad0"/></svg>
<div style="left:1898.5px;top:193px;width:125.5px;height:29.5px;background:linear-gradient(#f4f4f4,#ededed 45%,#e2e2e2 75%,#d6d6d6);border:1px solid #a0a0a0;border-radius:1px;box-sizing:border-box;box-shadow:inset 0 0 0 1px rgba(255,255,255,.6)"></div>
<svg style="position:absolute;left:1903.5px;top:199.75px" width="14" height="16" viewBox="0 0 14 16"><path d="M0.7 0.7 H9 L13.3 5 V15.3 H0.7Z" fill="#f8f9fc" stroke="#7a90c0" stroke-width="1.3"/><path d="M9 0.7 V5 H13.3" fill="#c8d4ec" stroke="#7a90c0" stroke-width="1"/><rect x="2.5" y="8.5" width="9" height="5" fill="#b4c2e4"/><rect x="2.5" y="6.5" width="9" height="1.5" fill="#dfe6f4"/></svg>
<div class="t" style="left:1922.5px;top:201.95px;font-size:12.4px;line-height:12.4px;color:#000;transform:scaleX(0.9476);transform-origin:0 0;">Etiquette carton</div>
<div style="left:1898.5px;top:226px;width:125.5px;height:29.5px;background:linear-gradient(#f4f4f4,#ededed 45%,#e2e2e2 75%,#d6d6d6);border:1px solid #a0a0a0;border-radius:1px;box-sizing:border-box;box-shadow:inset 0 0 0 1px rgba(255,255,255,.6)"></div>
<svg style="position:absolute;left:1903.5px;top:232.75px" width="14" height="16" viewBox="0 0 14 16"><path d="M0.7 0.7 H9 L13.3 5 V15.3 H0.7Z" fill="#f8f9fc" stroke="#7a90c0" stroke-width="1.3"/><path d="M9 0.7 V5 H13.3" fill="#c8d4ec" stroke="#7a90c0" stroke-width="1"/><rect x="2.5" y="8.5" width="9" height="5" fill="#b4c2e4"/><rect x="2.5" y="6.5" width="9" height="1.5" fill="#dfe6f4"/></svg>
<div class="t" style="left:1922.5px;top:234.95px;font-size:12.4px;line-height:12.4px;color:#000;transform:scaleX(0.9476);transform-origin:0 0;">Etiquette palette</div>
<div style="left:1898.5px;top:259.5px;width:101px;height:31px;background:linear-gradient(#f4f4f4,#ededed 45%,#e2e2e2 75%,#d6d6d6);border:1px solid #a0a0a0;border-radius:1px;box-sizing:border-box;box-shadow:inset 0 0 0 1px rgba(255,255,255,.6)"></div>
<svg style="position:absolute;left:1901.5px;top:265.0px" width="20" height="20" viewBox="0 0 20 20"><rect x="0.8" y="1.8" width="15" height="14.5" rx="1.5" fill="#fafafa" stroke="#555" stroke-width="1.3"/><rect x="9" y="2.5" width="6.3" height="13" fill="#d4d4d4"/><path d="M8.5 2 V16" stroke="#777" stroke-width="1"/><path d="M1 2.5 H16" stroke="#444" stroke-width="1.6"/><circle cx="14.2" cy="15" r="4.2" fill="#44b834"/><path d="M11.8 15 H16.6 M14.2 12.6 V17.4" stroke="#d8f8d0" stroke-width="1.6"/></svg>
<div class="t" style="left:1922.5px;top:269.20px;font-size:12.4px;line-height:12.4px;color:#000;transform:scaleX(0.9476);transform-origin:0 0;">Activer Sélect.</div>
<div style="left:2002.5px;top:259.5px;width:21.5px;height:31px;background:linear-gradient(#f4f4f4,#ededed 45%,#e2e2e2 75%,#d6d6d6);border:1px solid #a0a0a0;border-radius:1px;box-sizing:border-box;box-shadow:inset 0 0 0 1px rgba(255,255,255,.6)"></div>
<svg style="position:absolute;left:2006.0px;top:267.5px" width="15" height="15" viewBox="0 0 14 14"><path d="M1.5 1.5 L12.5 12.5 M12.5 1.5 L1.5 12.5" stroke="#1a1a1a" stroke-width="1.9"/></svg>
<div style="left:1898.5px;top:297px;width:125.5px;height:29.5px;background:linear-gradient(#f4f4f4,#ededed 45%,#e2e2e2 75%,#d6d6d6);border:1px solid #a0a0a0;border-radius:1px;box-sizing:border-box;box-shadow:inset 0 0 0 1px rgba(255,255,255,.6)"></div>
<svg style="position:absolute;left:1901.5px;top:302.75px" width="19" height="18" viewBox="0 0 19 18"><path d="M9.5 1.8 L11.8 6.8 L17.3 7.3 L13.1 11 L14.4 16.3 L9.5 13.5 L4.6 16.3 L5.9 11 L1.7 7.3 L7.2 6.8Z" fill="#f8d820" stroke="#b09010" stroke-width="1.6" stroke-linejoin="round"/><path d="M9.5 4.5 L10.8 8 L7.5 9.5Z" fill="#fff" opacity=".45"/></svg>
<div class="t" style="left:1922.5px;top:305.95px;font-size:12.4px;line-height:12.4px;color:#000;transform:scaleX(0.9476);transform-origin:0 0;">Lancer prépa V2</div>
<div style="left:1898.5px;top:330px;width:125.5px;height:29.5px;background:linear-gradient(#f4f4f4,#ededed 45%,#e2e2e2 75%,#d6d6d6);border:1px solid #a0a0a0;border-radius:1px;box-sizing:border-box;box-shadow:inset 0 0 0 1px rgba(255,255,255,.6)"></div>
<svg style="position:absolute;left:1901.5px;top:335.75px" width="19" height="18" viewBox="0 0 19 18"><path d="M9.5 1.8 L11.8 6.8 L17.3 7.3 L13.1 11 L14.4 16.3 L9.5 13.5 L4.6 16.3 L5.9 11 L1.7 7.3 L7.2 6.8Z" fill="#6aaaf0" stroke="#3a78c8" stroke-width="1.6" stroke-linejoin="round"/><path d="M9.5 4.5 L10.8 8 L7.5 9.5Z" fill="#fff" opacity=".45"/></svg>
<div class="t" style="left:1922.5px;top:338.95px;font-size:12.4px;line-height:12.4px;color:#000;transform:scaleX(0.9476);transform-origin:0 0;">Fin prépa Multiligne</div>
<div style="left:1898.5px;top:364.5px;width:125.5px;height:29.5px;background:linear-gradient(#f4f4f4,#ededed 45%,#e2e2e2 75%,#d6d6d6);border:1px solid #a0a0a0;border-radius:1px;box-sizing:border-box;box-shadow:inset 0 0 0 1px rgba(255,255,255,.6)"></div>
<svg style="position:absolute;left:1901.5px;top:370.25px" width="19" height="18" viewBox="0 0 19 18"><path d="M9.5 1.8 L11.8 6.8 L17.3 7.3 L13.1 11 L14.4 16.3 L9.5 13.5 L4.6 16.3 L5.9 11 L1.7 7.3 L7.2 6.8Z" fill="#f86040" stroke="#c04020" stroke-width="1.6" stroke-linejoin="round"/><path d="M9.5 4.5 L10.8 8 L7.5 9.5Z" fill="#fff" opacity=".45"/></svg>
<div class="t" style="left:1922.5px;top:373.45px;font-size:12.4px;line-height:12.4px;color:#000;transform:scaleX(0.9476);transform-origin:0 0;">Valider BL multi</div>
<div style="left:1898.5px;top:399px;width:126px;height:29.5px;background:linear-gradient(#f4f4f4,#ededed 45%,#e2e2e2 75%,#d6d6d6);border:1px solid #a0a0a0;border-radius:1px;box-sizing:border-box;box-shadow:inset 0 0 0 1px rgba(255,255,255,.6)"></div>
<svg style="position:absolute;left:1901.5px;top:404.25px" width="19" height="19" viewBox="0 0 19 19"><path d="M2.5 13 A7 7 0 0 1 8.5 3.2 V0.8 L13.5 5.2 L8.5 9.6 V7 A3.6 3.6 0 0 0 6 12.5Z" fill="#3cb43a" stroke="#248a22" stroke-width=".6"/><path d="M16.5 6 A7 7 0 0 1 10.5 15.8 V18.2 L5.5 13.8 L10.5 9.4 V12 A3.6 3.6 0 0 0 13 6.5Z" fill="#f0582a" stroke="#c03c18" stroke-width=".6"/></svg>
<div class="t" style="left:1922.5px;top:407.95px;font-size:12.4px;line-height:12.4px;color:#000;transform:scaleX(0.9476);transform-origin:0 0;">Expédition auto.</div>
<div style="left:1898.5px;top:433px;width:125.5px;height:28.5px;background:linear-gradient(#f4f4f4,#ededed 45%,#e2e2e2 75%,#d6d6d6);border:1px solid #a0a0a0;border-radius:1px;box-sizing:border-box;box-shadow:inset 0 0 0 1px rgba(255,255,255,.6)"></div>
<svg style="position:absolute;left:1903.5px;top:438.75px" width="17" height="17" viewBox="0 0 17 17"><path d="M0.7 0.7 H8.5 L12.3 4.5 V15.3 H0.7Z" fill="#f6f8fc" stroke="#7a90c0" stroke-width="1.2"/><path d="M2.5 6H9M2.5 8.2H7" stroke="#9aaad0"/><circle cx="11.3" cy="12" r="4.8" fill="#2aa53c"/><path d="M8.8 12 L10.7 13.9 L13.8 10.4" stroke="#fff" stroke-width="1.5" fill="none"/></svg>
<div class="t" style="left:1922.5px;top:441.45px;font-size:12.4px;line-height:12.4px;color:#000;transform:scaleX(0.9476);transform-origin:0 0;">Valider BL</div>
<div style="left:1898.5px;top:467px;width:98.5px;height:29px;background:linear-gradient(#f4f4f4,#ededed 45%,#e2e2e2 75%,#d6d6d6);border:1px solid #a0a0a0;border-radius:1px;box-sizing:border-box;box-shadow:inset 0 0 0 1px rgba(255,255,255,.6)"></div>
<svg style="position:absolute;left:1903.5px;top:473.5px" width="14" height="16" viewBox="0 0 14 16"><path d="M0.7 0.7 H9 L13.3 5 V15.3 H0.7Z" fill="#f8f9fc" stroke="#7a90c0" stroke-width="1.3"/><path d="M9 0.7 V5 H13.3" fill="#c8d4ec" stroke="#7a90c0" stroke-width="1"/><rect x="2.5" y="8.5" width="9" height="5" fill="#b4c2e4"/><rect x="2.5" y="6.5" width="9" height="1.5" fill="#dfe6f4"/></svg>
<div class="t" style="left:1922.5px;top:475.70px;font-size:12.4px;line-height:12.4px;color:#000;transform:scaleX(0.9476);transform-origin:0 0;">Bon livraison</div>
<div style="left:2000px;top:467px;width:24px;height:29px;background:linear-gradient(#f4f4f4,#ededed 45%,#e2e2e2 75%,#d6d6d6);border:1px solid #a0a0a0;border-radius:1px;box-sizing:border-box;box-shadow:inset 0 0 0 1px rgba(255,255,255,.6)"></div>
<svg style="position:absolute;left:2003px;top:474.5px" width="16" height="14" viewBox="0 0 16 14"><path d="M1 5 L8 1 L15 5 V13 H1Z" fill="#eee8f8" stroke="#8a8ad0"/><path d="M1 5 L8 9.5 L15 5" fill="#f4e4a8" stroke="#8a8ad0"/><path d="M1 13 L6 8 M15 13 L10 8" stroke="#8a8ad0"/></svg>
<div style="left:1898.5px;top:500.5px;width:98.5px;height:29px;background:linear-gradient(#f4f4f4,#ededed 45%,#e2e2e2 75%,#d6d6d6);border:1px solid #a0a0a0;border-radius:1px;box-sizing:border-box;box-shadow:inset 0 0 0 1px rgba(255,255,255,.6)"></div>
<svg style="position:absolute;left:1903.5px;top:507.0px" width="14" height="16" viewBox="0 0 14 16"><path d="M0.7 0.7 H9 L13.3 5 V15.3 H0.7Z" fill="#f8f9fc" stroke="#7a90c0" stroke-width="1.3"/><path d="M9 0.7 V5 H13.3" fill="#c8d4ec" stroke="#7a90c0" stroke-width="1"/><rect x="2.5" y="8.5" width="9" height="5" fill="#b4c2e4"/><rect x="2.5" y="6.5" width="9" height="1.5" fill="#dfe6f4"/></svg>
<div class="t" style="left:1922.5px;top:509.20px;font-size:12.4px;line-height:12.4px;color:#000;transform:scaleX(0.9476);transform-origin:0 0;">Packing list</div>
<div style="left:2000px;top:500.5px;width:24px;height:29px;background:linear-gradient(#f4f4f4,#ededed 45%,#e2e2e2 75%,#d6d6d6);border:1px solid #a0a0a0;border-radius:1px;box-sizing:border-box;box-shadow:inset 0 0 0 1px rgba(255,255,255,.6)"></div>
<svg style="position:absolute;left:2003px;top:508.0px" width="16" height="14" viewBox="0 0 16 14"><path d="M1 5 L8 1 L15 5 V13 H1Z" fill="#eee8f8" stroke="#8a8ad0"/><path d="M1 5 L8 9.5 L15 5" fill="#f4e4a8" stroke="#8a8ad0"/><path d="M1 13 L6 8 M15 13 L10 8" stroke="#8a8ad0"/></svg>
<div style="left:1898.5px;top:540px;width:125.5px;height:29.5px;background:#ececec;border:1px solid #c4c4c4;border-radius:2px;box-sizing:border-box"></div>
<svg style="position:absolute;left:1902.5px;top:547.25px" width="17" height="15" viewBox="0 0 17 15"><path d="M1 5 H8 V1 L15.5 7.5 L8 14 V10 H1 Z" fill="#52cc28" stroke="#2a9a10" stroke-width="1"/></svg>
<div class="t" style="left:1922.5px;top:548.95px;font-size:12.4px;line-height:12.4px;color:#8a8a8a;transform:scaleX(0.9476);transform-origin:0 0;">Facturer</div>
<div style="left:1742.5px;top:229.7px;width:125.5px;height:29.5px;background:linear-gradient(#f4f4f4,#ededed 45%,#e2e2e2 75%,#d6d6d6);border:1px solid #a0a0a0;border-radius:1px;box-sizing:border-box;box-shadow:inset 0 0 0 1px rgba(255,255,255,.6)"></div>
<svg style="position:absolute;left:1745.5px;top:235.95px" width="18" height="17" viewBox="0 0 18 17"><path d="M2.5 0.5 H6.5 V4 L8 8.5 V16.5 H0.5 V8.5 L2 4Z" fill="#14307c"/><path d="M11 0.5 H15 L15.5 4 L17.5 8.5 V16.5 H9.5 V8.5 L11 4Z" fill="#14307c"/><rect x="7" y="6" width="4" height="5.5" fill="#0c2060"/><rect x="2" y="10.5" width="1.6" height="4.5" fill="#8aa4d8"/><rect x="5" y="10.5" width="1.6" height="4.5" fill="#6a88c8"/><rect x="11" y="10.5" width="1.6" height="4.5" fill="#8aa4d8"/><rect x="14" y="10.5" width="1.6" height="4.5" fill="#6a88c8"/><rect x="3.5" y="2" width="2" height="1.2" fill="#7a94c8"/><rect x="12" y="2" width="2" height="1.2" fill="#7a94c8"/><rect x="1.5" y="7.5" width="5.5" height="1.2" fill="#5a78b8"/><rect x="10.5" y="7.5" width="5.5" height="1.2" fill="#5a78b8"/></svg>
<div class="t" style="left:1767px;top:238.65px;font-size:12.4px;line-height:12.4px;color:#000;transform:scaleX(0.9476);transform-origin:0 0;">Prépa. en cours</div>
<div style="left:1742.5px;top:263.15px;width:125.5px;height:29.5px;background:linear-gradient(#f4f4f4,#ededed 45%,#e2e2e2 75%,#d6d6d6);border:1px solid #a0a0a0;border-radius:1px;box-sizing:border-box;box-shadow:inset 0 0 0 1px rgba(255,255,255,.6)"></div>
<svg style="position:absolute;left:1745.5px;top:269.4px" width="18" height="17" viewBox="0 0 18 17"><path d="M2.5 0.5 H6.5 V4 L8 8.5 V16.5 H0.5 V8.5 L2 4Z" fill="#14307c"/><path d="M11 0.5 H15 L15.5 4 L17.5 8.5 V16.5 H9.5 V8.5 L11 4Z" fill="#14307c"/><rect x="7" y="6" width="4" height="5.5" fill="#0c2060"/><rect x="2" y="10.5" width="1.6" height="4.5" fill="#8aa4d8"/><rect x="5" y="10.5" width="1.6" height="4.5" fill="#6a88c8"/><rect x="11" y="10.5" width="1.6" height="4.5" fill="#8aa4d8"/><rect x="14" y="10.5" width="1.6" height="4.5" fill="#6a88c8"/><rect x="3.5" y="2" width="2" height="1.2" fill="#7a94c8"/><rect x="12" y="2" width="2" height="1.2" fill="#7a94c8"/><rect x="1.5" y="7.5" width="5.5" height="1.2" fill="#5a78b8"/><rect x="10.5" y="7.5" width="5.5" height="1.2" fill="#5a78b8"/></svg>
<div class="t" style="left:1767px;top:272.10px;font-size:12.4px;line-height:12.4px;color:#000;transform:scaleX(0.9476);transform-origin:0 0;">Prépa. du jour</div>
<div style="left:1742.5px;top:296.6px;width:125.5px;height:29.5px;background:linear-gradient(#f4f4f4,#ededed 45%,#e2e2e2 75%,#d6d6d6);border:1px solid #a0a0a0;border-radius:1px;box-sizing:border-box;box-shadow:inset 0 0 0 1px rgba(255,255,255,.6)"></div>
<svg style="position:absolute;left:1745.5px;top:302.85px" width="18" height="17" viewBox="0 0 18 17"><path d="M2.5 0.5 H6.5 V4 L8 8.5 V16.5 H0.5 V8.5 L2 4Z" fill="#14307c"/><path d="M11 0.5 H15 L15.5 4 L17.5 8.5 V16.5 H9.5 V8.5 L11 4Z" fill="#14307c"/><rect x="7" y="6" width="4" height="5.5" fill="#0c2060"/><rect x="2" y="10.5" width="1.6" height="4.5" fill="#8aa4d8"/><rect x="5" y="10.5" width="1.6" height="4.5" fill="#6a88c8"/><rect x="11" y="10.5" width="1.6" height="4.5" fill="#8aa4d8"/><rect x="14" y="10.5" width="1.6" height="4.5" fill="#6a88c8"/><rect x="3.5" y="2" width="2" height="1.2" fill="#7a94c8"/><rect x="12" y="2" width="2" height="1.2" fill="#7a94c8"/><rect x="1.5" y="7.5" width="5.5" height="1.2" fill="#5a78b8"/><rect x="10.5" y="7.5" width="5.5" height="1.2" fill="#5a78b8"/></svg>
<div class="t" style="left:1767px;top:305.55px;font-size:12.4px;line-height:12.4px;color:#000;transform:scaleX(0.9476);transform-origin:0 0;">Prépa V.I.P.</div>
<div style="left:1742.5px;top:330.05px;width:125.5px;height:29.5px;background:linear-gradient(#f4f4f4,#ededed 45%,#e2e2e2 75%,#d6d6d6);border:1px solid #a0a0a0;border-radius:1px;box-sizing:border-box;box-shadow:inset 0 0 0 1px rgba(255,255,255,.6)"></div>
<svg style="position:absolute;left:1745.5px;top:336.3px" width="18" height="17" viewBox="0 0 18 17"><path d="M2.5 0.5 H6.5 V4 L8 8.5 V16.5 H0.5 V8.5 L2 4Z" fill="#14307c"/><path d="M11 0.5 H15 L15.5 4 L17.5 8.5 V16.5 H9.5 V8.5 L11 4Z" fill="#14307c"/><rect x="7" y="6" width="4" height="5.5" fill="#0c2060"/><rect x="2" y="10.5" width="1.6" height="4.5" fill="#8aa4d8"/><rect x="5" y="10.5" width="1.6" height="4.5" fill="#6a88c8"/><rect x="11" y="10.5" width="1.6" height="4.5" fill="#8aa4d8"/><rect x="14" y="10.5" width="1.6" height="4.5" fill="#6a88c8"/><rect x="3.5" y="2" width="2" height="1.2" fill="#7a94c8"/><rect x="12" y="2" width="2" height="1.2" fill="#7a94c8"/><rect x="1.5" y="7.5" width="5.5" height="1.2" fill="#5a78b8"/><rect x="10.5" y="7.5" width="5.5" height="1.2" fill="#5a78b8"/></svg>
<div class="t" style="left:1767px;top:339.00px;font-size:12.4px;line-height:12.4px;color:#000;transform:scaleX(0.9476);transform-origin:0 0;">Prépa. campagne</div>
<div style="left:1742.5px;top:363.5px;width:125.5px;height:29.5px;background:linear-gradient(#f4f4f4,#ededed 45%,#e2e2e2 75%,#d6d6d6);border:1px solid #a0a0a0;border-radius:1px;box-sizing:border-box;box-shadow:inset 0 0 0 1px rgba(255,255,255,.6)"></div>
<svg style="position:absolute;left:1745.5px;top:369.75px" width="18" height="17" viewBox="0 0 18 17"><path d="M2.5 0.5 H6.5 V4 L8 8.5 V16.5 H0.5 V8.5 L2 4Z" fill="#14307c"/><path d="M11 0.5 H15 L15.5 4 L17.5 8.5 V16.5 H9.5 V8.5 L11 4Z" fill="#14307c"/><rect x="7" y="6" width="4" height="5.5" fill="#0c2060"/><rect x="2" y="10.5" width="1.6" height="4.5" fill="#8aa4d8"/><rect x="5" y="10.5" width="1.6" height="4.5" fill="#6a88c8"/><rect x="11" y="10.5" width="1.6" height="4.5" fill="#8aa4d8"/><rect x="14" y="10.5" width="1.6" height="4.5" fill="#6a88c8"/><rect x="3.5" y="2" width="2" height="1.2" fill="#7a94c8"/><rect x="12" y="2" width="2" height="1.2" fill="#7a94c8"/><rect x="1.5" y="7.5" width="5.5" height="1.2" fill="#5a78b8"/><rect x="10.5" y="7.5" width="5.5" height="1.2" fill="#5a78b8"/></svg>
<div class="t" style="left:1767px;top:372.45px;font-size:12.4px;line-height:12.4px;color:#000;transform:scaleX(0.9476);transform-origin:0 0;">Prépa. longue</div>
<div style="left:1742.5px;top:396.95px;width:125.5px;height:29.5px;background:linear-gradient(#f4f4f4,#ededed 45%,#e2e2e2 75%,#d6d6d6);border:1px solid #a0a0a0;border-radius:1px;box-sizing:border-box;box-shadow:inset 0 0 0 1px rgba(255,255,255,.6)"></div>
<svg style="position:absolute;left:1745.5px;top:403.2px" width="18" height="17" viewBox="0 0 18 17"><path d="M2.5 0.5 H6.5 V4 L8 8.5 V16.5 H0.5 V8.5 L2 4Z" fill="#14307c"/><path d="M11 0.5 H15 L15.5 4 L17.5 8.5 V16.5 H9.5 V8.5 L11 4Z" fill="#14307c"/><rect x="7" y="6" width="4" height="5.5" fill="#0c2060"/><rect x="2" y="10.5" width="1.6" height="4.5" fill="#8aa4d8"/><rect x="5" y="10.5" width="1.6" height="4.5" fill="#6a88c8"/><rect x="11" y="10.5" width="1.6" height="4.5" fill="#8aa4d8"/><rect x="14" y="10.5" width="1.6" height="4.5" fill="#6a88c8"/><rect x="3.5" y="2" width="2" height="1.2" fill="#7a94c8"/><rect x="12" y="2" width="2" height="1.2" fill="#7a94c8"/><rect x="1.5" y="7.5" width="5.5" height="1.2" fill="#5a78b8"/><rect x="10.5" y="7.5" width="5.5" height="1.2" fill="#5a78b8"/></svg>
<div class="t" style="left:1767px;top:405.90px;font-size:12.4px;line-height:12.4px;color:#000;transform:scaleX(0.9476);transform-origin:0 0;">OE retour</div>
<div style="left:1745.5px;top:447.5px;width:128px;height:21px;background:#ececec;border:1px solid #a8a8a8;box-sizing:border-box"></div>
<div class="t" style="left:1749px;top:452.40px;font-size:12.4px;line-height:12.4px;color:#000;transform:scaleX(0.9476);transform-origin:0 0;">Toutes les dates</div>
<div style="left:1852px;top:469px;width:22px;height:85px;background:#e6e6e6;border:1px solid #b8b8b8;border-left:none;box-sizing:border-box"></div>
<svg style="position:absolute;left:1855.5px;top:504.0px" width="15" height="15" viewBox="0 0 14 14"><path d="M1.5 1.5 L12.5 12.5 M12.5 1.5 L1.5 12.5" stroke="#1a1a1a" stroke-width="1.9"/></svg>
<div style="left:1745.5px;top:469px;width:107px;height:42px;background:linear-gradient(#f4f4f4,#ededed 45%,#e2e2e2 75%,#d6d6d6);border:1px solid #a0a0a0;border-radius:1px;box-sizing:border-box;box-shadow:inset 0 0 0 1px rgba(255,255,255,.6)"></div>
<svg style="position:absolute;left:1748.5px;top:481.5px" width="18" height="17" viewBox="0 0 18 17"><path d="M2.5 0.5 H6.5 V4 L8 8.5 V16.5 H0.5 V8.5 L2 4Z" fill="#14307c"/><path d="M11 0.5 H15 L15.5 4 L17.5 8.5 V16.5 H9.5 V8.5 L11 4Z" fill="#14307c"/><rect x="7" y="6" width="4" height="5.5" fill="#0c2060"/><rect x="2" y="10.5" width="1.6" height="4.5" fill="#8aa4d8"/><rect x="5" y="10.5" width="1.6" height="4.5" fill="#6a88c8"/><rect x="11" y="10.5" width="1.6" height="4.5" fill="#8aa4d8"/><rect x="14" y="10.5" width="1.6" height="4.5" fill="#6a88c8"/><rect x="3.5" y="2" width="2" height="1.2" fill="#7a94c8"/><rect x="12" y="2" width="2" height="1.2" fill="#7a94c8"/><rect x="1.5" y="7.5" width="5.5" height="1.2" fill="#5a78b8"/><rect x="10.5" y="7.5" width="5.5" height="1.2" fill="#5a78b8"/></svg>
<div class="t" style="left:1769px;top:484.20px;font-size:12.4px;line-height:12.4px;color:#000;transform:scaleX(0.9476);transform-origin:0 0;">Date exp. prevu</div>
<div style="left:1745.5px;top:512px;width:107px;height:42px;background:linear-gradient(#f4f4f4,#ededed 45%,#e2e2e2 75%,#d6d6d6);border:1px solid #a0a0a0;border-radius:1px;box-sizing:border-box;box-shadow:inset 0 0 0 1px rgba(255,255,255,.6)"></div>
<svg style="position:absolute;left:1748.5px;top:524.5px" width="18" height="17" viewBox="0 0 18 17"><path d="M2.5 0.5 H6.5 V4 L8 8.5 V16.5 H0.5 V8.5 L2 4Z" fill="#14307c"/><path d="M11 0.5 H15 L15.5 4 L17.5 8.5 V16.5 H9.5 V8.5 L11 4Z" fill="#14307c"/><rect x="7" y="6" width="4" height="5.5" fill="#0c2060"/><rect x="2" y="10.5" width="1.6" height="4.5" fill="#8aa4d8"/><rect x="5" y="10.5" width="1.6" height="4.5" fill="#6a88c8"/><rect x="11" y="10.5" width="1.6" height="4.5" fill="#8aa4d8"/><rect x="14" y="10.5" width="1.6" height="4.5" fill="#6a88c8"/><rect x="3.5" y="2" width="2" height="1.2" fill="#7a94c8"/><rect x="12" y="2" width="2" height="1.2" fill="#7a94c8"/><rect x="1.5" y="7.5" width="5.5" height="1.2" fill="#5a78b8"/><rect x="10.5" y="7.5" width="5.5" height="1.2" fill="#5a78b8"/></svg>
<div class="t" style="left:1769px;top:527.20px;font-size:12.4px;line-height:12.4px;color:#000;transform:scaleX(0.9476);transform-origin:0 0;">Prochain jours</div>
<div style="left:26px;top:275px;width:861px;height:300px;background:#fff;border-left:1px solid #b8b8bc;border-right:2px solid #a4a4a8;border-bottom:2px solid #a4a4a8;box-sizing:border-box"></div>
<div style="left:26px;top:275px;width:861px;height:18px;background:#c0cfde"></div>
<div class="t" style="left:33px;top:278.40px;font-size:12.4px;line-height:12.4px;color:#1a1a1a;transform:scaleX(0.9264);transform-origin:0 0;">Lignes Cde (Réservation incl) [2]</div>
<div style="left:954.5px;top:273px;width:777px;height:299px;background:#fff;border-left:1px solid #c8c8cc;border-right:2px solid #a8a8ac;border-bottom:2px solid #a8a8ac;box-sizing:border-box"></div>
<div style="left:954.5px;top:273px;width:777px;height:18px;background:#c0cfde"></div>
<div class="t" style="left:961.5px;top:276.40px;font-size:12.4px;line-height:12.4px;color:#1a1a1a;transform:scaleX(0.9243);transform-origin:0 0;">Lignes prélevées</div>
<div style="left:27px;top:293px;width:836px;height:19px;background:linear-gradient(#ffffff,#f3f3f3);border-bottom:2px solid #9a9a9a;box-sizing:border-box"></div>
<div style="left:27px;top:293px;width:16.5px;height:19px;background:#f0f0f0;border-bottom:2px solid #9a9a9a;box-sizing:border-box"></div>
<div style="left:27px;top:312.0px;width:16.5px;height:18.3px;background:#f0f0f0;border-right:1px solid #c8c8c8;border-bottom:1px solid #c8c8c8;box-sizing:border-box"></div>
<div style="left:43.5px;top:312.0px;width:21.5px;height:18.3px;background:#fffbe6;border-right:1px solid #c8c8c8;border-bottom:1px solid #c8c8c8;box-sizing:border-box"></div>
<div style="left:65px;top:312.0px;width:97px;height:18.3px;background:#80e68a;border-right:1px solid #c8c8c8;border-bottom:1px solid #c8c8c8;box-sizing:border-box"></div>
<div style="left:162px;top:312.0px;width:339.5px;height:18.3px;background:#80e68a;border-right:1px solid #c8c8c8;border-bottom:1px solid #c8c8c8;box-sizing:border-box"></div>
<div style="left:501.5px;top:312.0px;width:226.0px;height:18.3px;background:#80e68a;border-right:1px solid #c8c8c8;border-bottom:1px solid #c8c8c8;box-sizing:border-box"></div>
<div style="left:727.5px;top:312.0px;width:62.0px;height:18.3px;background:#80e68a;border-right:1px solid #c8c8c8;border-bottom:1px solid #c8c8c8;box-sizing:border-box"></div>
<div style="left:789.5px;top:312.0px;width:73.5px;height:18.3px;background:#80e68a;border-right:1px solid #c8c8c8;border-bottom:1px solid #c8c8c8;box-sizing:border-box"></div>
<div style="left:27px;top:330.3px;width:16.5px;height:18.3px;background:#f0f0f0;border-right:1px solid #c8c8c8;border-bottom:1px solid #c8c8c8;box-sizing:border-box"></div>
<div style="left:43.5px;top:330.3px;width:21.5px;height:18.3px;background:#e6fbe6;border-right:1px solid #c8c8c8;border-bottom:1px solid #c8c8c8;box-sizing:border-box"></div>
<div style="left:65px;top:330.3px;width:97px;height:18.3px;background:#e6fbe6;border-right:1px solid #c8c8c8;border-bottom:1px solid #c8c8c8;box-sizing:border-box"></div>
<div style="left:162px;top:330.3px;width:339.5px;height:18.3px;background:#e6fbe6;border-right:1px solid #c8c8c8;border-bottom:1px solid #c8c8c8;box-sizing:border-box"></div>
<div style="left:501.5px;top:330.3px;width:226.0px;height:18.3px;background:#e6fbe6;border-right:1px solid #c8c8c8;border-bottom:1px solid #c8c8c8;box-sizing:border-box"></div>
<div style="left:727.5px;top:330.3px;width:62.0px;height:18.3px;background:#e6fbe6;border-right:1px solid #c8c8c8;border-bottom:1px solid #c8c8c8;box-sizing:border-box"></div>
<div style="left:789.5px;top:330.3px;width:73.5px;height:18.3px;background:#e6fbe6;border-right:1px solid #c8c8c8;border-bottom:1px solid #c8c8c8;box-sizing:border-box"></div>
<div style="left:27px;top:348.6px;width:16.5px;height:18.3px;background:#f0f0f0;border-right:1px solid #c8c8c8;border-bottom:1px solid #c8c8c8;box-sizing:border-box"></div>
<div style="left:43.5px;top:348.6px;width:21.5px;height:18.3px;background:#fff;border-right:1px solid #c8c8c8;border-bottom:1px solid #c8c8c8;box-sizing:border-box"></div>
<div style="left:65px;top:348.6px;width:97px;height:18.3px;background:#fff;border-right:1px solid #c8c8c8;border-bottom:1px solid #c8c8c8;box-sizing:border-box"></div>
<div style="left:162px;top:348.6px;width:339.5px;height:18.3px;background:#fff;border-right:1px solid #c8c8c8;border-bottom:1px solid #c8c8c8;box-sizing:border-box"></div>
<div style="left:501.5px;top:348.6px;width:226.0px;height:18.3px;background:#fff;border-right:1px solid #c8c8c8;border-bottom:1px solid #c8c8c8;box-sizing:border-box"></div>
<div style="left:727.5px;top:348.6px;width:62.0px;height:18.3px;background:#fff;border-right:1px solid #c8c8c8;border-bottom:1px solid #c8c8c8;box-sizing:border-box"></div>
<div style="left:789.5px;top:348.6px;width:73.5px;height:18.3px;background:#fff;border-right:1px solid #c8c8c8;border-bottom:1px solid #c8c8c8;box-sizing:border-box"></div>
<div style="left:41.5px;top:293px;width:2px;height:73.9px;background:#a0a0a0"></div>
<div style="left:27px;top:364.9px;width:16.5px;height:2px;background:#a0a0a0"></div>
<div style="left:42.5px;top:294px;width:1px;height:17px;background:#b0b0b0"></div>
<div style="left:64px;top:294px;width:1px;height:17px;background:#b0b0b0"></div>
<div style="left:161px;top:294px;width:1px;height:17px;background:#b0b0b0"></div>
<div style="left:500.5px;top:294px;width:1px;height:17px;background:#b0b0b0"></div>
<div style="left:726.5px;top:294px;width:1px;height:17px;background:#b0b0b0"></div>
<div style="left:788.5px;top:294px;width:1px;height:17px;background:#b0b0b0"></div>
<div style="left:862px;top:294px;width:1px;height:17px;background:#b0b0b0"></div>
<div class="t" style="left:46.5px;top:297.50px;font-size:12.4px;line-height:12.4px;color:#1a1a1a;transform:scaleX(0.9476);transform-origin:0 0;">Lig</div>
<div class="t" style="left:68px;top:297.50px;font-size:12.4px;line-height:12.4px;color:#1a1a1a;transform:scaleX(0.9476);transform-origin:0 0;">Code article</div>
<div class="t" style="left:165px;top:297.50px;font-size:12.4px;line-height:12.4px;color:#1a1a1a;transform:scaleX(0.9476);transform-origin:0 0;">Lib. Article</div>
<div class="t" style="left:504.5px;top:297.50px;font-size:12.4px;line-height:12.4px;color:#1a1a1a;transform:scaleX(0.9416);transform-origin:0 0;">Réservation / Dispo stock</div>
<div class="t" style="left:730.5px;top:297.50px;font-size:12.4px;line-height:12.4px;color:#1a1a1a;transform:scaleX(0.9615);transform-origin:0 0;">Qté à prél.</div>
<div class="t" style="left:792.5px;top:297.50px;font-size:12.4px;line-height:12.4px;color:#1a1a1a;transform:scaleX(0.9624);transform-origin:0 0;">Qté réservé</div>
<svg style="position:absolute;left:151.5px;top:294px" width="7" height="7"><path d="M0 0 H7 V7Z" fill="#000"/></svg>
<svg style="position:absolute;left:494px;top:294px" width="7" height="7"><path d="M0 0 H7 V7Z" fill="#000"/></svg>
<svg style="position:absolute;left:33px;top:316px" width="8" height="11"><path d="M0 0 L7.5 5.5 L0 11Z" fill="#000"/></svg>
<div style="left:158.5px;top:294px;width:4px;height:73px;background:#dcdcdc;border-left:1px solid #b4b4b4;border-right:1px solid #b4b4b4;box-sizing:border-box"></div>
<div style="left:857px;top:294px;width:1px;height:73px;background:#c0c0c0"></div>
<div style="left:860px;top:294px;width:1px;height:73px;background:#c0c0c0"></div>
<div class="t" style="right:1987px;top:315.60px;font-size:12.4px;line-height:12.4px;color:#c01010;transform:scaleX(0.9476);transform-origin:100% 0;">10</div>
<div style="left:66px;top:313.7px;width:94px;height:16px;overflow:hidden">
<div class="t" style="left:2px;top:1.90px;font-size:12.4px;line-height:12.4px;color:#1a1a1a;transform:scaleX(0.8675);transform-origin:0 0;">CHSMB-B-NLF-20</div>
</div>
<div class="t" style="left:165px;top:315.60px;font-size:12.4px;line-height:12.4px;color:#1a1a1a;transform:scaleX(0.8713);transform-origin:0 0;">Dom Niellon CHSMB-Trad 2020 BT CRD</div>
<div class="t" style="left:504.5px;top:315.60px;font-size:12.4px;line-height:12.4px;color:#1a1a1a;transform:scaleX(0.8779);transform-origin:0 0;">Emp : PREPA</div>
<div class="t" style="right:1262.5px;top:315.60px;font-size:12.4px;line-height:12.4px;color:#1a1a1a;transform:scaleX(0.9476);transform-origin:100% 0;">12</div>
<div class="t" style="right:1193px;top:315.60px;font-size:12.4px;line-height:12.4px;color:#1a1a1a;transform:scaleX(0.9476);transform-origin:100% 0;">12</div>
<div class="t" style="right:1987px;top:333.90px;font-size:12.4px;line-height:12.4px;color:#1a1a1a;transform:scaleX(0.9476);transform-origin:100% 0;">30</div>
<div style="left:66px;top:332.0px;width:94px;height:16px;overflow:hidden">
<div class="t" style="left:2px;top:1.90px;font-size:12.4px;line-height:12.4px;color:#1a1a1a;transform:scaleX(0.9357);transform-origin:0 0;">PICLP-R-ERL-20-I</div>
</div>
<div class="t" style="left:165px;top:333.90px;font-size:12.4px;line-height:12.4px;color:#1a1a1a;transform:scaleX(0.8950);transform-origin:0 0;">Ermitage PICLP-TourPierres 2020 BT CRD</div>
<div class="t" style="left:504.5px;top:333.90px;font-size:12.4px;line-height:12.4px;color:#1a1a1a;transform:scaleX(0.9128);transform-origin:0 0;">Emp : B03</div>
<div class="t" style="right:1262.5px;top:333.90px;font-size:12.4px;line-height:12.4px;color:#1a1a1a;transform:scaleX(0.9476);transform-origin:100% 0;">12</div>
<div class="t" style="right:1193px;top:333.90px;font-size:12.4px;line-height:12.4px;color:#1a1a1a;transform:scaleX(0.9476);transform-origin:100% 0;">8</div>
<div style="left:955.5px;top:291px;width:750.5px;height:19.5px;background:linear-gradient(#ffffff,#f3f3f3);border-bottom:2px solid #9a9a9a;box-sizing:border-box"></div>
<div style="left:955.5px;top:291px;width:17.0px;height:19.5px;background:#f0f0f0;border-bottom:2px solid #9a9a9a;box-sizing:border-box"></div>
<div style="left:955.5px;top:310.5px;width:17.0px;height:18.3px;background:#f0f0f0;border-right:1px solid #c8c8c8;border-bottom:1px solid #c8c8c8;box-sizing:border-box"></div>
<div style="left:972.5px;top:310.5px;width:23.5px;height:18.3px;background:#fffbe6;border-right:1px solid #c8c8c8;border-bottom:1px solid #c8c8c8;box-sizing:border-box"></div>
<div style="left:996px;top:310.5px;width:124.5px;height:18.3px;background:#fff;border-right:1px solid #c8c8c8;border-bottom:1px solid #c8c8c8;box-sizing:border-box"></div>
<div style="left:1120.5px;top:310.5px;width:314.0px;height:18.3px;background:#fff;border-right:1px solid #c8c8c8;border-bottom:1px solid #c8c8c8;box-sizing:border-box"></div>
<div style="left:1434.5px;top:310.5px;width:101.5px;height:18.3px;background:#fff;border-right:1px solid #c8c8c8;border-bottom:1px solid #c8c8c8;box-sizing:border-box"></div>
<div style="left:1536px;top:310.5px;width:97px;height:18.3px;background:#fff;border-right:1px solid #c8c8c8;border-bottom:1px solid #c8c8c8;box-sizing:border-box"></div>
<div style="left:1633px;top:310.5px;width:73px;height:18.3px;background:#fff;border-right:1px solid #c8c8c8;border-bottom:1px solid #c8c8c8;box-sizing:border-box"></div>
<div style="left:970.5px;top:291px;width:2px;height:37.8px;background:#a0a0a0"></div>
<div style="left:955.5px;top:326.8px;width:17.0px;height:2px;background:#a0a0a0"></div>
<div style="left:971.5px;top:292px;width:1px;height:17.5px;background:#b0b0b0"></div>
<div style="left:995px;top:292px;width:1px;height:17.5px;background:#b0b0b0"></div>
<div style="left:1119.5px;top:292px;width:1px;height:17.5px;background:#b0b0b0"></div>
<div style="left:1433.5px;top:292px;width:1px;height:17.5px;background:#b0b0b0"></div>
<div style="left:1535px;top:292px;width:1px;height:17.5px;background:#b0b0b0"></div>
<div style="left:1632px;top:292px;width:1px;height:17.5px;background:#b0b0b0"></div>
<div style="left:1705px;top:292px;width:1px;height:17.5px;background:#b0b0b0"></div>
<div class="t" style="left:975.5px;top:295.50px;font-size:12.4px;line-height:12.4px;color:#1a1a1a;transform:scaleX(0.9476);transform-origin:0 0;">Lig</div>
<div class="t" style="left:999px;top:295.50px;font-size:12.4px;line-height:12.4px;color:#1a1a1a;transform:scaleX(0.9476);transform-origin:0 0;">Code article</div>
<div class="t" style="left:1123.5px;top:295.50px;font-size:12.4px;line-height:12.4px;color:#1a1a1a;transform:scaleX(0.9476);transform-origin:0 0;">Lib. Article</div>
<div class="t" style="left:1437.5px;top:295.50px;font-size:12.4px;line-height:12.4px;color:#1a1a1a;transform:scaleX(0.8975);transform-origin:0 0;">Emplacement</div>
<div class="t" style="left:1539px;top:295.50px;font-size:12.4px;line-height:12.4px;color:#1a1a1a;transform:scaleX(0.9476);transform-origin:0 0;">N° lot</div>
<div class="t" style="left:1636px;top:295.50px;font-size:12.4px;line-height:12.4px;color:#1a1a1a;transform:scaleX(0.9476);transform-origin:0 0;">Qté expéd.</div>
<svg style="position:absolute;left:989px;top:292px" width="7" height="7"><path d="M0 0 H7 V7Z" fill="#000"/></svg>
<svg style="position:absolute;left:1113.5px;top:292px" width="7" height="7"><path d="M0 0 H7 V7Z" fill="#000"/></svg>
<svg style="position:absolute;left:1529px;top:292px" width="7" height="7"><path d="M0 0 H7 V7Z" fill="#000"/></svg>
<svg style="position:absolute;left:1626px;top:292px" width="7" height="7"><path d="M0 0 H7 V7Z" fill="#000"/></svg>
<svg style="position:absolute;left:961.5px;top:314.5px" width="8" height="11"><path d="M0 0 L7.5 5.5 L0 11Z" fill="#000"/></svg>
<div style="left:896.5px;top:275px;width:52px;height:24px;background:linear-gradient(#f4f4f4,#ededed 45%,#e2e2e2 75%,#d6d6d6);border:1px solid #a0a0a0;border-radius:1px;box-sizing:border-box;box-shadow:inset 0 0 0 1px rgba(255,255,255,.6)"></div>
<svg style="position:absolute;left:913.5px;top:279.5px" width="17" height="15" viewBox="0 0 17 15"><path d="M1 5 H8 V1 L15.5 7.5 L8 14 V10 H1 Z" fill="#52cc28" stroke="#2a9a10" stroke-width="1"/></svg>
<div style="left:896.5px;top:302.4px;width:52px;height:23.5px;background:linear-gradient(#f4f4f4,#ededed 45%,#e2e2e2 75%,#d6d6d6);border:1px solid #a0a0a0;border-radius:1px;box-sizing:border-box;box-shadow:inset 0 0 0 1px rgba(255,255,255,.6)"></div>
<div style="left:896.5px;top:329px;width:52px;height:23.5px;background:linear-gradient(#f4f4f4,#ededed 45%,#e2e2e2 75%,#d6d6d6);border:1px solid #a0a0a0;border-radius:1px;box-sizing:border-box;box-shadow:inset 0 0 0 1px rgba(255,255,255,.6)"></div>
<div style="left:896.5px;top:356px;width:52px;height:23.5px;background:linear-gradient(#f4f4f4,#ededed 45%,#e2e2e2 75%,#d6d6d6);border:1px solid #a0a0a0;border-radius:1px;box-sizing:border-box;box-shadow:inset 0 0 0 1px rgba(255,255,255,.6)"></div>
<svg style="position:absolute;left:903px;top:306px" width="18" height="18"><rect x="0.7" y="0.7" width="14" height="14.5" rx="2" fill="#dfe8fc" stroke="#6a82d0" stroke-width="1.2"/><path d="M3 4H12.5M3 6.3H12.5M3 8.6H12.5M3 10.9H9" stroke="#5a70c8" stroke-width="1.1"/><circle cx="13" cy="13" r="4.3" fill="#28a838"/><path d="M10.8 13 L12.5 14.7 L15.2 11.6" stroke="#fff" stroke-width="1.4" fill="none"/></svg>
<svg style="position:absolute;left:927px;top:306px" width="16" height="16"><defs><pattern id="hp" width="3" height="3" patternUnits="userSpaceOnUse" patternTransform="rotate(45)"><rect width="1.5" height="3" fill="#c8c8c8"/></pattern></defs><rect width="16" height="16" fill="url(#hp)"/></svg>
<div style="left:923px;top:308px;width:1px;height:12px;background:#c0c0c0"></div>
<svg style="position:absolute;left:903px;top:333px" width="18" height="18"><rect x="0.7" y="0.7" width="14" height="14.5" rx="2" fill="#eaf2fe" stroke="#6a82d0" stroke-width="1.2"/><circle cx="13" cy="13" r="4.3" fill="#d02828"/><path d="M10.8 13 L12.5 14.7 L15.2 11.6" stroke="#fff" stroke-width="1.4" fill="none"/></svg>
<svg style="position:absolute;left:927px;top:333px" width="16" height="16"><defs><pattern id="hp" width="3" height="3" patternUnits="userSpaceOnUse" patternTransform="rotate(45)"><rect width="1.5" height="3" fill="#c8c8c8"/></pattern></defs><rect width="16" height="16" fill="url(#hp)"/></svg>
<div style="left:923px;top:335px;width:1px;height:12px;background:#c0c0c0"></div>
<svg style="position:absolute;left:903px;top:360px" width="16" height="16"><defs><pattern id="hp" width="3" height="3" patternUnits="userSpaceOnUse" patternTransform="rotate(45)"><rect width="1.5" height="3" fill="#c8c8c8"/></pattern></defs><rect width="16" height="16" fill="url(#hp)"/></svg>
<div style="left:923px;top:362px;width:1px;height:12px;background:#c0c0c0"></div>
<svg style="position:absolute;left:927px;top:359px" width="18" height="18"><rect x="0.7" y="0.7" width="14" height="14.5" rx="2" fill="#e8eefc" stroke="#6a82d0" stroke-width="1.2"/><path d="M3 4H12.5M3 6.3H12.5" stroke="#e04848" stroke-width="1.1"/><path d="M3 8.6H10M3 10.9H9" stroke="#5a70c8" stroke-width="1.1"/><rect x="9" y="9" width="8.5" height="8.5" fill="#e02828"/><path d="M11.3 11.3 L15.2 15.2 M15.2 11.3 L11.3 15.2" stroke="#fff" stroke-width="1.3"/></svg>
<div style="left:896.5px;top:382.6px;width:52px;height:23.5px;background:linear-gradient(#f4f4f4,#ededed 45%,#e2e2e2 75%,#d6d6d6);border:1px solid #a0a0a0;border-radius:1px;box-sizing:border-box;box-shadow:inset 0 0 0 1px rgba(255,255,255,.6)"></div>
<svg style="position:absolute;left:914px;top:386px" width="16" height="16"><path d="M1 1 H13 L15 3 V15 H1Z" fill="#1a4aa8"/><rect x="4" y="1" width="8" height="5" fill="#b8c8e8"/><rect x="4" y="9" width="8" height="6" fill="#6a8ad0"/></svg>
</body></html>
